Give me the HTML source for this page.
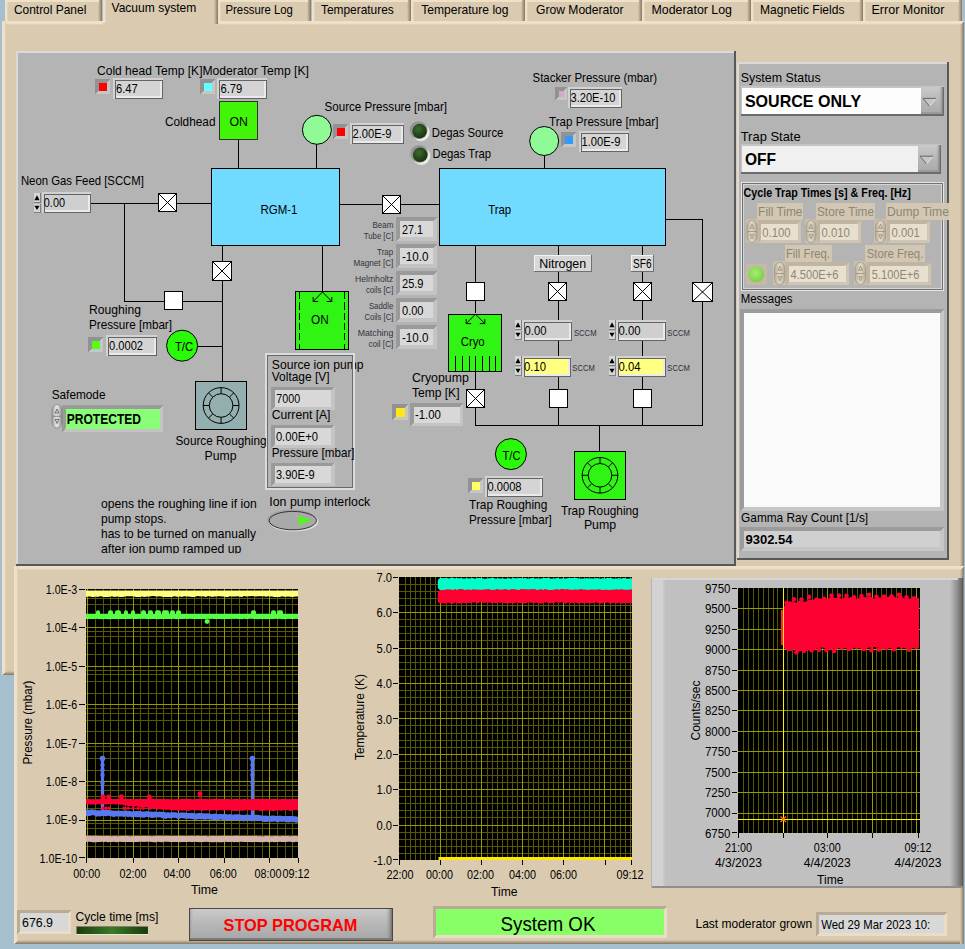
<!DOCTYPE html><html><head><meta charset="utf-8"><title>Vacuum system</title><style>html,body{margin:0;padding:0;background:#A6BFCE;overflow:hidden}svg{display:block;font-family:"Liberation Sans", sans-serif}</style></head><body>
<svg width="965" height="949" viewBox="0 0 965 949">
<g shape-rendering="crispEdges">
<rect x="0" y="0" width="965" height="949" fill="#A6BFCE" />
</g>
<defs><linearGradient id="bl" x1="0" x2="1" y1="0" y2="0"><stop offset="0" stop-color="#EEE1C7"/><stop offset="0.6" stop-color="#EEE1C7"/><stop offset="1" stop-color="#D9CAB0"/></linearGradient><linearGradient id="bt" x1="0" x2="0" y1="0" y2="1"><stop offset="0" stop-color="#EEE1C7"/><stop offset="0.6" stop-color="#EEE1C7"/><stop offset="1" stop-color="#D9CAB0"/></linearGradient><linearGradient id="br" x1="0" x2="1" y1="0" y2="0"><stop offset="0" stop-color="#D9CAB0"/><stop offset="1" stop-color="#857861"/></linearGradient><linearGradient id="bb" x1="0" x2="0" y1="0" y2="1"><stop offset="0" stop-color="#D9CAB0"/><stop offset="1" stop-color="#857861"/></linearGradient></defs>
<g shape-rendering="crispEdges">
<rect x="2" y="21" width="962" height="654" fill="#D9CAB0"/>
<rect x="2" y="21" width="962" height="4" fill="url(#bt)"/>
<rect x="2" y="21" width="4" height="654" fill="url(#bl)"/>
<polygon points="2,675 6,671 964,671 964,675" fill="url(#bb)"/>
<polygon points="964,21 960,25 960,675 964,675" fill="url(#br)"/>
<rect x="5" y="0" width="97" height="21" fill="#D9CAB0"/>
<rect x="5" y="0" width="3" height="21" fill="url(#bl)"/>
<rect x="98" y="0" width="4" height="21" fill="url(#br)"/>
<rect x="5" y="0" width="94" height="2" fill="#EEE1C7"/>
<rect x="218" y="0" width="93" height="21" fill="#D9CAB0"/>
<rect x="218" y="0" width="3" height="21" fill="url(#bl)"/>
<rect x="307" y="0" width="4" height="21" fill="url(#br)"/>
<rect x="218" y="0" width="90" height="2" fill="#EEE1C7"/>
<rect x="312" y="0" width="99" height="21" fill="#D9CAB0"/>
<rect x="312" y="0" width="3" height="21" fill="url(#bl)"/>
<rect x="407" y="0" width="4" height="21" fill="url(#br)"/>
<rect x="312" y="0" width="96" height="2" fill="#EEE1C7"/>
<rect x="411" y="0" width="114" height="21" fill="#D9CAB0"/>
<rect x="411" y="0" width="3" height="21" fill="url(#bl)"/>
<rect x="521" y="0" width="4" height="21" fill="url(#br)"/>
<rect x="411" y="0" width="111" height="2" fill="#EEE1C7"/>
<rect x="525" y="0" width="117" height="21" fill="#D9CAB0"/>
<rect x="525" y="0" width="3" height="21" fill="url(#bl)"/>
<rect x="638" y="0" width="4" height="21" fill="url(#br)"/>
<rect x="525" y="0" width="114" height="2" fill="#EEE1C7"/>
<rect x="642" y="0" width="109" height="21" fill="#D9CAB0"/>
<rect x="642" y="0" width="3" height="21" fill="url(#bl)"/>
<rect x="747" y="0" width="4" height="21" fill="url(#br)"/>
<rect x="642" y="0" width="106" height="2" fill="#EEE1C7"/>
<rect x="751" y="0" width="112" height="21" fill="#D9CAB0"/>
<rect x="751" y="0" width="3" height="21" fill="url(#bl)"/>
<rect x="859" y="0" width="4" height="21" fill="url(#br)"/>
<rect x="751" y="0" width="109" height="2" fill="#EEE1C7"/>
<rect x="863" y="0" width="99" height="21" fill="#D9CAB0"/>
<rect x="863" y="0" width="3" height="21" fill="url(#bl)"/>
<rect x="958" y="0" width="4" height="21" fill="url(#br)"/>
<rect x="863" y="0" width="96" height="2" fill="#EEE1C7"/>
<rect x="103" y="0" width="115" height="25" fill="#D9CAB0"/>
<rect x="103" y="0" width="3" height="23" fill="url(#bl)"/>
<rect x="214" y="0" width="4" height="24" fill="url(#br)"/>
</g>
<text x="13.9" y="14.0" font-size="12.7" font-weight="normal" fill="#000" text-anchor="start" textLength="72.4" lengthAdjust="spacingAndGlyphs" >Control Panel</text>
<text x="111.5" y="12.0" font-size="12.7" font-weight="normal" fill="#000" text-anchor="start" textLength="84.8" lengthAdjust="spacingAndGlyphs" >Vacuum system</text>
<text x="225.5" y="14.0" font-size="12.7" font-weight="normal" fill="#000" text-anchor="start" textLength="67.4" lengthAdjust="spacingAndGlyphs" >Pressure Log</text>
<text x="321.0" y="14.0" font-size="12.7" font-weight="normal" fill="#000" text-anchor="start" textLength="72.7" lengthAdjust="spacingAndGlyphs" >Temperatures</text>
<text x="421.3" y="14.0" font-size="12.7" font-weight="normal" fill="#000" text-anchor="start" textLength="87.2" lengthAdjust="spacingAndGlyphs" >Temperature log</text>
<text x="536.0" y="14.0" font-size="12.7" font-weight="normal" fill="#000" text-anchor="start" textLength="87.5" lengthAdjust="spacingAndGlyphs" >Grow Moderator</text>
<text x="651.5" y="14.0" font-size="12.7" font-weight="normal" fill="#000" text-anchor="start" textLength="80.5" lengthAdjust="spacingAndGlyphs" >Moderator Log</text>
<text x="760.0" y="14.0" font-size="12.7" font-weight="normal" fill="#000" text-anchor="start" textLength="84.5" lengthAdjust="spacingAndGlyphs" >Magnetic Fields</text>
<text x="871.5" y="14.0" font-size="12.7" font-weight="normal" fill="#000" text-anchor="start" textLength="73.0" lengthAdjust="spacingAndGlyphs" >Error Monitor</text>
<g shape-rendering="crispEdges">
<rect x="14" y="566" width="950" height="378" fill="#D9CAB0"/>
<rect x="14" y="566" width="950" height="4" fill="url(#bt)"/>
<rect x="14" y="566" width="4" height="378" fill="url(#bl)"/>
<polygon points="14,944 18,940 964,940 964,944" fill="url(#bb)"/>
<polygon points="964,566 960,570 960,944 964,944" fill="url(#br)"/>
<rect x="16" y="51" width="720" height="515" fill="#B4B4B4" />
<rect x="16" y="51" width="720" height="2" fill="#DADADA"/>
<rect x="16" y="51" width="2" height="515" fill="#DADADA"/>
<rect x="16" y="564" width="720" height="2" fill="#585858"/>
<rect x="734" y="51" width="2" height="515" fill="#585858"/>
<rect x="737" y="62" width="212" height="498" fill="#B4B4B4" />
<rect x="737" y="62" width="212" height="2" fill="#DADADA"/>
<rect x="737" y="62" width="2" height="498" fill="#DADADA"/>
<rect x="737" y="558" width="212" height="2" fill="#585858"/>
<rect x="947" y="62" width="2" height="498" fill="#585858"/>
<rect x="91" y="203" width="67" height="1" fill="#000"/>
<rect x="177" y="203" width="34" height="1" fill="#000"/>
<rect x="124" y="203" width="1" height="98" fill="#000"/>
<rect x="124" y="301" width="40" height="1" fill="#000"/>
<rect x="183" y="301" width="39" height="1" fill="#000"/>
<rect x="238" y="140" width="1" height="28" fill="#000"/>
<rect x="316" y="144" width="1" height="24" fill="#000"/>
<rect x="222" y="246" width="1" height="15" fill="#000"/>
<rect x="222" y="280" width="1" height="101" fill="#000"/>
<rect x="198" y="346" width="24" height="1" fill="#000"/>
<rect x="322" y="246" width="1" height="45" fill="#000"/>
<rect x="340" y="204" width="42" height="1" fill="#000"/>
<rect x="401" y="204" width="38" height="1" fill="#000"/>
<rect x="544" y="156" width="1" height="12" fill="#000"/>
<rect x="666" y="219" width="37" height="1" fill="#000"/>
<rect x="702" y="219" width="1" height="63" fill="#000"/>
<rect x="702" y="302" width="1" height="124" fill="#000"/>
<rect x="475" y="246" width="1" height="36" fill="#000"/>
<rect x="475" y="300" width="1" height="13" fill="#000"/>
<rect x="475" y="371" width="1" height="18" fill="#000"/>
<rect x="475" y="407" width="1" height="19" fill="#000"/>
<rect x="558" y="246" width="1" height="9" fill="#000"/>
<rect x="558" y="272" width="1" height="10" fill="#000"/>
<rect x="558" y="301" width="1" height="20" fill="#000"/>
<rect x="558" y="341" width="1" height="16" fill="#000"/>
<rect x="558" y="377" width="1" height="12" fill="#000"/>
<rect x="558" y="408" width="1" height="18" fill="#000"/>
<rect x="642" y="246" width="1" height="9" fill="#000"/>
<rect x="642" y="272" width="1" height="10" fill="#000"/>
<rect x="642" y="301" width="1" height="20" fill="#000"/>
<rect x="642" y="341" width="1" height="16" fill="#000"/>
<rect x="642" y="377" width="1" height="12" fill="#000"/>
<rect x="642" y="408" width="1" height="18" fill="#000"/>
<rect x="475" y="425" width="228" height="1" fill="#000"/>
<rect x="599" y="425" width="1" height="26" fill="#000"/>
<rect x="211.6" y="168.6" width="127.8" height="76.8" fill="#70DBFF" stroke="#000" stroke-width="1.2" />
<rect x="439.6" y="168.6" width="225.8" height="76.8" fill="#70DBFF" stroke="#000" stroke-width="1.2" />
<rect x="219.5" y="101.5" width="38" height="38" fill="#40F508" stroke="#303030" stroke-width="1" />
<rect x="295.7" y="291.7" width="52.6" height="57.6" fill="#30F514" stroke="#000" stroke-width="1.4" />
<rect x="448.7" y="314.2" width="52.6" height="57.1" fill="#30F514" stroke="#000" stroke-width="1.4" />
<rect x="574.6" y="451.6" width="50.8" height="47.8" fill="#30F514" stroke="#000" stroke-width="1.2" />
<rect x="195.6" y="381.6" width="50.8" height="47.8" fill="#94AFAF" stroke="#000" stroke-width="1.2" />
<rect x="158.7" y="193.7" width="17.6" height="17.6" fill="#fff" stroke="#000" stroke-width="1.4" />
<g shape-rendering="auto"><path d="M159 194L176 211M176 194L159 211" stroke="#000" stroke-width="1" fill="none"/></g>
<rect x="212.7" y="261.7" width="18.6" height="18.6" fill="#fff" stroke="#000" stroke-width="1.4" />
<g shape-rendering="auto"><path d="M213 262L231 280M231 262L213 280" stroke="#000" stroke-width="1" fill="none"/></g>
<rect x="382.7" y="195.7" width="17.6" height="17.6" fill="#fff" stroke="#000" stroke-width="1.4" />
<g shape-rendering="auto"><path d="M383 196L400 213M400 196L383 213" stroke="#000" stroke-width="1" fill="none"/></g>
<rect x="164.7" y="291.7" width="17.6" height="17.6" fill="#fff" stroke="#000" stroke-width="1.4" />
<rect x="466.7" y="282.7" width="17.6" height="17.6" fill="#fff" stroke="#000" stroke-width="1.4" />
<rect x="548.7" y="282.7" width="17.6" height="17.6" fill="#fff" stroke="#000" stroke-width="1.4" />
<g shape-rendering="auto"><path d="M549 283L566 300M566 283L549 300" stroke="#000" stroke-width="1" fill="none"/></g>
<rect x="633.7" y="282.7" width="17.6" height="17.6" fill="#fff" stroke="#000" stroke-width="1.4" />
<g shape-rendering="auto"><path d="M634 283L651 300M651 283L634 300" stroke="#000" stroke-width="1" fill="none"/></g>
<rect x="692.7" y="282.7" width="19.6" height="18.6" fill="#fff" stroke="#000" stroke-width="1.4" />
<g shape-rendering="auto"><path d="M693 283L712 301M712 283L693 301" stroke="#000" stroke-width="1" fill="none"/></g>
<rect x="466.7" y="389.7" width="17.6" height="17.6" fill="#fff" stroke="#000" stroke-width="1.4" />
<g shape-rendering="auto"><path d="M467 390L484 407M484 390L467 407" stroke="#000" stroke-width="1" fill="none"/></g>
<rect x="549.7" y="389.7" width="17.6" height="17.6" fill="#fff" stroke="#000" stroke-width="1.4" />
<rect x="633.7" y="389.7" width="17.6" height="17.6" fill="#fff" stroke="#000" stroke-width="1.4" />
<rect x="299" y="292" width="1" height="7" fill="#000"/>
<rect x="299" y="302" width="1" height="8" fill="#000"/>
<rect x="299" y="313" width="1" height="7" fill="#000"/>
<rect x="299" y="323" width="1" height="7" fill="#000"/>
<rect x="299" y="333" width="1" height="7" fill="#000"/>
<rect x="299" y="344" width="1" height="5" fill="#000"/>
<rect x="344" y="292" width="1" height="7" fill="#000"/>
<rect x="344" y="302" width="1" height="8" fill="#000"/>
<rect x="344" y="313" width="1" height="7" fill="#000"/>
<rect x="344" y="323" width="1" height="7" fill="#000"/>
<rect x="344" y="333" width="1" height="7" fill="#000"/>
<rect x="344" y="344" width="1" height="5" fill="#000"/>
<rect x="455" y="356" width="1" height="15" fill="#000"/>
<rect x="462" y="356" width="1" height="15" fill="#000"/>
<rect x="469" y="356" width="1" height="15" fill="#000"/>
<rect x="475" y="356" width="1" height="15" fill="#000"/>
<rect x="482" y="356" width="1" height="15" fill="#000"/>
<rect x="489" y="356" width="1" height="15" fill="#000"/>
<rect x="495" y="356" width="1" height="15" fill="#000"/>
</g>
<path d="M322.5 292L313.2 301.5M322.5 292L331.8 301.5M313.2 297.0V301.5H318.2M331.8 297.0V301.5H326.8" stroke="#000" stroke-width="1" fill="none"/>
<path d="M475.5 314.2L466.2 323.6M475.5 314.2L484.8 323.6M466.2 319.1V323.6H471.2M484.8 319.1V323.6H479.8" stroke="#000" stroke-width="1" fill="none"/>
<circle cx="316.9" cy="129.8" r="14.5" fill="#90FA96" stroke="#000" stroke-width="1.0"/>
<circle cx="544.2" cy="141" r="14.5" fill="#90FA96" stroke="#000" stroke-width="1.0"/>
<circle cx="182.1" cy="345.7" r="15.5" fill="#28FA08" stroke="#000" stroke-width="1.0"/>
<circle cx="510.9" cy="454.1" r="15.5" fill="#28FA08" stroke="#000" stroke-width="1.0"/>
<g stroke="#000" stroke-width="1" fill="none"><circle cx="221.1" cy="405.5" r="17.9"/><circle cx="221.1" cy="405.5" r="11.8"/>
<path d="M221.1 417.3L221.1 423.4"/>
<path d="M212.8 413.8L208.4 418.2"/>
<path d="M209.3 405.5L203.2 405.5"/>
<path d="M212.8 397.2L208.4 392.8"/>
<path d="M221.1 393.7L221.1 387.6"/>
<path d="M229.4 397.2L233.8 392.8"/>
<path d="M232.9 405.5L239.0 405.5"/>
<path d="M229.4 413.8L233.8 418.2"/>
</g>
<g stroke="#000" stroke-width="1" fill="none"><circle cx="600" cy="475.3" r="17.8"/><circle cx="600" cy="475.3" r="11.8"/>
<path d="M600.0 487.1L600.0 493.1"/>
<path d="M591.7 483.6L587.4 487.9"/>
<path d="M588.2 475.3L582.2 475.3"/>
<path d="M591.7 467.0L587.4 462.7"/>
<path d="M600.0 463.5L600.0 457.5"/>
<path d="M608.3 467.0L612.6 462.7"/>
<path d="M611.8 475.3L617.8 475.3"/>
<path d="M608.3 483.6L612.6 487.9"/>
</g>
<defs><radialGradient id="lg1" cx="40%" cy="35%" r="70%"><stop offset="0" stop-color="#3E6A30"/><stop offset="1" stop-color="#14300C"/></radialGradient></defs>
<circle cx="420.8" cy="132.29999999999998" r="8.9" fill="#E8E8E8"/><circle cx="418.6" cy="130.1" r="8.9" fill="#949494"/>
<circle cx="419.6" cy="131.1" r="7.3" fill="url(#lg1)"/>
<defs><radialGradient id="lg2" cx="40%" cy="35%" r="70%"><stop offset="0" stop-color="#3E6A30"/><stop offset="1" stop-color="#14300C"/></radialGradient></defs>
<circle cx="421.4" cy="156.0" r="8.9" fill="#E8E8E8"/><circle cx="419.2" cy="153.8" r="8.9" fill="#949494"/>
<circle cx="420.2" cy="154.8" r="7.3" fill="url(#lg2)"/>
<g shape-rendering="crispEdges">
<rect x="95" y="79" width="15" height="15" fill="#C6C6C6" />
<polygon points="95,79 110,79 107,83 99,91 95,94" fill="#929292"/>
<rect x="99" y="83" width="8" height="8" fill="#FF0000" />
<rect x="113" y="78" width="50" height="21" fill="#D2D2D2" />
<rect x="115" y="80" width="48" height="19" fill="#646464" />
<rect x="116" y="81" width="46" height="17" fill="#EAEAEA" />
<rect x="116" y="81" width="44" height="15" fill="#D4D4D4" />
<rect x="200" y="79" width="15" height="15" fill="#C6C6C6" />
<polygon points="200,79 215,79 212,83 204,91 200,94" fill="#929292"/>
<rect x="204" y="83" width="8" height="8" fill="#66FFFF" />
<rect x="217" y="78" width="50" height="21" fill="#D2D2D2" />
<rect x="219" y="80" width="48" height="19" fill="#646464" />
<rect x="220" y="81" width="46" height="17" fill="#EAEAEA" />
<rect x="220" y="81" width="44" height="15" fill="#D4D4D4" />
<rect x="333" y="124" width="15" height="15" fill="#C6C6C6" />
<polygon points="333,124 348,124 345,128 337,136 333,139" fill="#929292"/>
<rect x="337" y="128" width="8" height="8" fill="#FF0000" />
<rect x="350" y="123" width="54" height="21" fill="#D2D2D2" />
<rect x="352" y="125" width="52" height="19" fill="#646464" />
<rect x="353" y="126" width="50" height="17" fill="#EAEAEA" />
<rect x="353" y="126" width="48" height="15" fill="#D4D4D4" />
<rect x="555" y="87" width="12" height="13" fill="#C6C6C6" />
<polygon points="555,87 567,87 564,91 559,97 555,100" fill="#929292"/>
<rect x="559" y="91" width="5" height="6" fill="#D8A8C8" />
<rect x="568" y="87" width="54" height="21" fill="#D2D2D2" />
<rect x="570" y="89" width="52" height="19" fill="#646464" />
<rect x="571" y="90" width="50" height="17" fill="#EAEAEA" />
<rect x="571" y="90" width="48" height="15" fill="#D4D4D4" />
<rect x="561" y="132" width="15" height="15" fill="#C6C6C6" />
<polygon points="561,132 576,132 573,136 565,144 561,147" fill="#929292"/>
<rect x="565" y="136" width="8" height="8" fill="#3399FF" />
<rect x="579" y="131" width="50" height="21" fill="#D2D2D2" />
<rect x="581" y="133" width="48" height="19" fill="#646464" />
<rect x="582" y="134" width="46" height="17" fill="#EAEAEA" />
<rect x="582" y="134" width="44" height="15" fill="#D4D4D4" />
<rect x="88" y="337" width="15" height="15" fill="#C6C6C6" />
<polygon points="88,337 103,337 100,341 92,349 88,352" fill="#929292"/>
<rect x="92" y="341" width="8" height="8" fill="#55FF11" />
<rect x="106" y="335" width="51" height="21" fill="#D2D2D2" />
<rect x="108" y="337" width="49" height="19" fill="#646464" />
<rect x="109" y="338" width="47" height="17" fill="#EAEAEA" />
<rect x="109" y="338" width="45" height="15" fill="#D4D4D4" />
<rect x="468" y="478" width="15" height="15" fill="#C6C6C6" />
<polygon points="468,478 483,478 480,482 472,490 468,493" fill="#929292"/>
<rect x="472" y="482" width="8" height="8" fill="#FFFF66" />
<rect x="485" y="476" width="58" height="21" fill="#D2D2D2" />
<rect x="487" y="478" width="56" height="19" fill="#646464" />
<rect x="488" y="479" width="54" height="17" fill="#EAEAEA" />
<rect x="488" y="479" width="52" height="15" fill="#D4D4D4" />
<rect x="34" y="193" width="7" height="9.5" fill="#D6D6D6" />
<rect x="34" y="201.5" width="7" height="1" fill="#808080"/>
<rect x="40" y="193" width="1" height="9.5" fill="#808080"/>
<polygon points="34.4,200.3 39.6,200.3 37.0,195.3" fill="#000" shape-rendering="auto"/>
<rect x="34" y="203.5" width="7" height="9.5" fill="#D6D6D6" />
<rect x="34" y="212" width="7" height="1" fill="#808080"/>
<rect x="40" y="203.5" width="1" height="9.5" fill="#808080"/>
<polygon points="34.4,205.7 39.6,205.7 37.0,210" fill="#000" shape-rendering="auto"/>
<rect x="42" y="192" width="49" height="21" fill="#D2D2D2" />
<rect x="44" y="194" width="47" height="19" fill="#646464" />
<rect x="45" y="195" width="45" height="17" fill="#EAEAEA" />
<rect x="45" y="195" width="43" height="15" fill="#CFCFCF" />
<rect x="515" y="320" width="7" height="9.5" fill="#D6D6D6" />
<rect x="515" y="328.5" width="7" height="1" fill="#808080"/>
<rect x="521" y="320" width="1" height="9.5" fill="#808080"/>
<polygon points="515.4,327.3 520.6,327.3 518.0,322.3" fill="#000" shape-rendering="auto"/>
<rect x="515" y="330.5" width="7" height="9.5" fill="#D6D6D6" />
<rect x="515" y="339" width="7" height="1" fill="#808080"/>
<rect x="521" y="330.5" width="1" height="9.5" fill="#808080"/>
<polygon points="515.4,332.7 520.6,332.7 518.0,337" fill="#000" shape-rendering="auto"/>
<rect x="522" y="320" width="50" height="21" fill="#D2D2D2" />
<rect x="524" y="322" width="48" height="19" fill="#646464" />
<rect x="525" y="323" width="46" height="17" fill="#EAEAEA" />
<rect x="525" y="323" width="44" height="15" fill="#CFCFCF" />
<rect x="515" y="356" width="7" height="9.5" fill="#D6D6D6" />
<rect x="515" y="364.5" width="7" height="1" fill="#808080"/>
<rect x="521" y="356" width="1" height="9.5" fill="#808080"/>
<polygon points="515.4,363.3 520.6,363.3 518.0,358.3" fill="#000" shape-rendering="auto"/>
<rect x="515" y="366.5" width="7" height="9.5" fill="#D6D6D6" />
<rect x="515" y="375" width="7" height="1" fill="#808080"/>
<rect x="521" y="366.5" width="1" height="9.5" fill="#808080"/>
<polygon points="515.4,368.7 520.6,368.7 518.0,373" fill="#000" shape-rendering="auto"/>
<rect x="522" y="356" width="49" height="21" fill="#D2D2D2" />
<rect x="524" y="358" width="47" height="19" fill="#646464" />
<rect x="525" y="359" width="45" height="17" fill="#EAEAEA" />
<rect x="525" y="359" width="43" height="15" fill="#FFFF82" />
<rect x="609" y="320" width="7" height="9.5" fill="#D6D6D6" />
<rect x="609" y="328.5" width="7" height="1" fill="#808080"/>
<rect x="615" y="320" width="1" height="9.5" fill="#808080"/>
<polygon points="609.4,327.3 614.6,327.3 612.0,322.3" fill="#000" shape-rendering="auto"/>
<rect x="609" y="330.5" width="7" height="9.5" fill="#D6D6D6" />
<rect x="609" y="339" width="7" height="1" fill="#808080"/>
<rect x="615" y="330.5" width="1" height="9.5" fill="#808080"/>
<polygon points="609.4,332.7 614.6,332.7 612.0,337" fill="#000" shape-rendering="auto"/>
<rect x="616" y="320" width="50" height="21" fill="#D2D2D2" />
<rect x="618" y="322" width="48" height="19" fill="#646464" />
<rect x="619" y="323" width="46" height="17" fill="#EAEAEA" />
<rect x="619" y="323" width="44" height="15" fill="#CFCFCF" />
<rect x="609" y="356" width="7" height="9.5" fill="#D6D6D6" />
<rect x="609" y="364.5" width="7" height="1" fill="#808080"/>
<rect x="615" y="356" width="1" height="9.5" fill="#808080"/>
<polygon points="609.4,363.3 614.6,363.3 612.0,358.3" fill="#000" shape-rendering="auto"/>
<rect x="609" y="366.5" width="7" height="9.5" fill="#D6D6D6" />
<rect x="609" y="375" width="7" height="1" fill="#808080"/>
<rect x="615" y="366.5" width="1" height="9.5" fill="#808080"/>
<polygon points="609.4,368.7 614.6,368.7 612.0,373" fill="#000" shape-rendering="auto"/>
<rect x="616" y="356" width="50" height="21" fill="#D2D2D2" />
<rect x="618" y="358" width="48" height="19" fill="#646464" />
<rect x="619" y="359" width="46" height="17" fill="#EAEAEA" />
<rect x="619" y="359" width="44" height="15" fill="#FFFF82" />
<rect x="396" y="217" width="41" height="24" fill="#C4C4C4" />
<polygon points="396,217 437,217 433,221 400,237 396,241" fill="#9A9A9A"/>
<rect x="400" y="221" width="33" height="16" fill="#D8D8D8" />
<rect x="396" y="244" width="41" height="24" fill="#C4C4C4" />
<polygon points="396,244 437,244 433,248 400,264 396,268" fill="#9A9A9A"/>
<rect x="400" y="248" width="33" height="16" fill="#D8D8D8" />
<rect x="396" y="271" width="41" height="24" fill="#C4C4C4" />
<polygon points="396,271 437,271 433,275 400,291 396,295" fill="#9A9A9A"/>
<rect x="400" y="275" width="33" height="16" fill="#D8D8D8" />
<rect x="396" y="298" width="41" height="24" fill="#C4C4C4" />
<polygon points="396,298 437,298 433,302 400,318 396,322" fill="#9A9A9A"/>
<rect x="400" y="302" width="33" height="16" fill="#D8D8D8" />
<rect x="396" y="325" width="41" height="24" fill="#C4C4C4" />
<polygon points="396,325 437,325 433,329 400,345 396,349" fill="#9A9A9A"/>
<rect x="400" y="329" width="33" height="16" fill="#D8D8D8" />
<rect x="534" y="255" width="58" height="17" fill="#D8D8D8" />
<rect x="534" y="255" width="58" height="1" fill="#F4F4F4"/>
<rect x="534" y="255" width="1" height="17" fill="#F4F4F4"/>
<rect x="534" y="271" width="58" height="1" fill="#707070"/>
<rect x="591" y="255" width="1" height="17" fill="#707070"/>
<rect x="631" y="255" width="23" height="17" fill="#D8D8D8" />
<rect x="631" y="255" width="23" height="1" fill="#F4F4F4"/>
<rect x="631" y="255" width="1" height="17" fill="#F4F4F4"/>
<rect x="631" y="271" width="23" height="1" fill="#707070"/>
<rect x="653" y="255" width="1" height="17" fill="#707070"/>
<rect x="392" y="404" width="16" height="16" fill="#C6C6C6" />
<polygon points="392,404 408,404 405,408 396,417 392,420" fill="#929292"/>
<rect x="396" y="408" width="9" height="9" fill="#FFE619" />
<rect x="410" y="403" width="53" height="23" fill="#C4C4C4" />
<polygon points="410,403 463,403 459.5,406.5 413.5,422.5 410,426" fill="#9A9A9A"/>
<rect x="413.5" y="406.5" width="46.0" height="16.0" fill="#D8D8D8" />
<rect x="265" y="353" width="90" height="137" fill="#B4B4B4" />
<rect x="266.0" y="354.0" width="88" height="135" fill="none" stroke="#DCDCDC" stroke-width="2" />
<rect x="267.5" y="355.5" width="85" height="132" fill="none" stroke="#6A6A6A" stroke-width="1" />
<rect x="271" y="387" width="64" height="23" fill="#C4C4C4" />
<polygon points="271,387 335,387 331,390 275,407 271,410" fill="#9A9A9A"/>
<rect x="275" y="390" width="56" height="17" fill="#D8D8D8" />
<rect x="271" y="425" width="64" height="23" fill="#C4C4C4" />
<polygon points="271,425 335,425 331,428 275,445 271,448" fill="#9A9A9A"/>
<rect x="275" y="428" width="56" height="17" fill="#D8D8D8" />
<rect x="271" y="463" width="64" height="23" fill="#C4C4C4" />
<polygon points="271,463 335,463 331,466 275,483 271,486" fill="#9A9A9A"/>
<rect x="275" y="466" width="56" height="17" fill="#D8D8D8" />
<rect x="62" y="405" width="101" height="27" fill="#C4C4C4" />
<polygon points="62,405 163,405 159.5,408.5 65.5,428.5 62,432" fill="#9A9A9A"/>
<rect x="65.5" y="408.5" width="94.0" height="20.0" fill="#88FF77" />
</g>
<defs><linearGradient id="rg1" x1="0" x2="1"><stop offset="0" stop-color="#9A9A9A"/><stop offset="0.4" stop-color="#E2E2E2"/><stop offset="0.6" stop-color="#DCDCDC"/><stop offset="1" stop-color="#8E8E8E"/></linearGradient><linearGradient id="rg2" x1="0" x2="1"><stop offset="0" stop-color="#B4AA96"/><stop offset="0.4" stop-color="#DFD6C3"/><stop offset="0.6" stop-color="#DAD1BE"/><stop offset="1" stop-color="#B0A692"/></linearGradient></defs>
<rect x="52" y="404.5" width="10" height="23.5" rx="5.0" ry="6.0" fill="url(#rg1)" stroke="#7C7C7C" stroke-width="0.7"/>
<path d="M52.5 416.25H61.5" stroke="#7C7C7C" stroke-width="0.9"/>
<path d="M55.2 413.05L57.0 409.05L58.8 413.05ZM55.2 419.45L57.0 423.45L58.8 419.45Z" stroke="#444" stroke-width="0.7" fill="none"/>
<ellipse cx="293.8" cy="521.6" rx="24.6" ry="10" fill="#DCDCDC"/><ellipse cx="291.8" cy="519.6" rx="24.6" ry="10" fill="#A2A2A2"/>
<ellipse cx="292.8" cy="520.6" rx="23.6" ry="9.2" fill="#A9A9A9" stroke="#333" stroke-width="1"/>
<polygon points="298.6,515.5 298.6,525.5 311.8,520.5" fill="#55F51A"/>
<text x="97.0" y="75.0" font-size="12.7" font-weight="normal" fill="#000" text-anchor="start" textLength="105.5" lengthAdjust="spacingAndGlyphs" >Cold head Temp [K]</text>
<text x="202.5" y="75.0" font-size="12.7" font-weight="normal" fill="#000" text-anchor="start" textLength="106.4" lengthAdjust="spacingAndGlyphs" >Moderator Temp [K]</text>
<text x="116.0" y="92.7" font-size="12.7" font-weight="normal" fill="#000" text-anchor="start" textLength="21.8" lengthAdjust="spacingAndGlyphs" >6.47</text>
<text x="220.5" y="92.7" font-size="12.7" font-weight="normal" fill="#000" text-anchor="start" textLength="21.8" lengthAdjust="spacingAndGlyphs" >6.79</text>
<text x="164.9" y="125.8" font-size="12.7" font-weight="normal" fill="#000" text-anchor="start" textLength="50.6" lengthAdjust="spacingAndGlyphs" >Coldhead</text>
<text x="229.5" y="126.0" font-size="12.7" font-weight="normal" fill="#000" text-anchor="start" textLength="18.5" lengthAdjust="spacingAndGlyphs" >ON</text>
<text x="324.5" y="111.0" font-size="12.7" font-weight="normal" fill="#000" text-anchor="start" textLength="122.5" lengthAdjust="spacingAndGlyphs" >Source Pressure [mbar]</text>
<text x="352.5" y="137.7" font-size="12.7" font-weight="normal" fill="#000" text-anchor="start" textLength="39.0" lengthAdjust="spacingAndGlyphs" >2.00E-9</text>
<text x="431.8" y="137.0" font-size="12.7" font-weight="normal" fill="#000" text-anchor="start" textLength="71.5" lengthAdjust="spacingAndGlyphs" >Degas Source</text>
<text x="432.5" y="158.0" font-size="12.7" font-weight="normal" fill="#000" text-anchor="start" textLength="58.5" lengthAdjust="spacingAndGlyphs" >Degas Trap</text>
<text x="20.9" y="184.8" font-size="12.7" font-weight="normal" fill="#000" text-anchor="start" textLength="123.0" lengthAdjust="spacingAndGlyphs" >Neon Gas Feed [SCCM]</text>
<text x="43.8" y="206.6" font-size="12.7" font-weight="normal" fill="#000" text-anchor="start" textLength="21.2" lengthAdjust="spacingAndGlyphs" >0.00</text>
<text x="260.5" y="214.0" font-size="12.7" font-weight="normal" fill="#000" text-anchor="start" textLength="37.0" lengthAdjust="spacingAndGlyphs" >RGM-1</text>
<text x="488.2" y="214.0" font-size="12.7" font-weight="normal" fill="#000" text-anchor="start" textLength="23.0" lengthAdjust="spacingAndGlyphs" >Trap</text>
<text x="532.5" y="81.8" font-size="12.7" font-weight="normal" fill="#000" text-anchor="start" textLength="124.6" lengthAdjust="spacingAndGlyphs" >Stacker Pressure (mbar)</text>
<text x="570.5" y="101.8" font-size="12.7" font-weight="normal" fill="#000" text-anchor="start" textLength="45.0" lengthAdjust="spacingAndGlyphs" >3.20E-10</text>
<text x="549.1" y="125.8" font-size="12.7" font-weight="normal" fill="#000" text-anchor="start" textLength="109.3" lengthAdjust="spacingAndGlyphs" >Trap Pressure [mbar]</text>
<text x="581.5" y="145.8" font-size="12.7" font-weight="normal" fill="#000" text-anchor="start" textLength="39.0" lengthAdjust="spacingAndGlyphs" >1.00E-9</text>
<text x="539.2" y="267.6" font-size="12.7" font-weight="normal" fill="#000" text-anchor="start" textLength="47.0" lengthAdjust="spacingAndGlyphs" >Nitrogen</text>
<text x="633.0" y="267.6" font-size="12.7" font-weight="normal" fill="#000" text-anchor="start" textLength="18.5" lengthAdjust="spacingAndGlyphs" >SF6</text>
<text x="89.0" y="314.3" font-size="12.7" font-weight="normal" fill="#000" text-anchor="start" textLength="52.0" lengthAdjust="spacingAndGlyphs" >Roughing</text>
<text x="89.0" y="329.0" font-size="12.7" font-weight="normal" fill="#000" text-anchor="start" textLength="83.0" lengthAdjust="spacingAndGlyphs" >Pressure [mbar]</text>
<text x="109.0" y="349.7" font-size="12.7" font-weight="normal" fill="#000" text-anchor="start" textLength="34.0" lengthAdjust="spacingAndGlyphs" >0.0002</text>
<text x="174.9" y="350.8" font-size="12.7" font-weight="normal" fill="#000" text-anchor="start" textLength="18.4" lengthAdjust="spacingAndGlyphs" >T/C</text>
<text x="502.5" y="460.3" font-size="12.7" font-weight="normal" fill="#000" text-anchor="start" textLength="18.0" lengthAdjust="spacingAndGlyphs" >T/C</text>
<text x="51.7" y="398.6" font-size="12.7" font-weight="normal" fill="#000" text-anchor="start" textLength="53.8" lengthAdjust="spacingAndGlyphs" >Safemode</text>
<text x="66.7" y="423.6" font-size="15" font-weight="bold" fill="#000" text-anchor="start" textLength="74.3" lengthAdjust="spacingAndGlyphs" >PROTECTED</text>
<text x="175.5" y="445.4" font-size="12.7" font-weight="normal" fill="#000" text-anchor="start" textLength="91.0" lengthAdjust="spacingAndGlyphs" >Source Roughing</text>
<text x="204.5" y="459.5" font-size="12.7" font-weight="normal" fill="#000" text-anchor="start" textLength="32.0" lengthAdjust="spacingAndGlyphs" >Pump</text>
<text x="311.1" y="323.5" font-size="12.7" font-weight="normal" fill="#000" text-anchor="start" textLength="17.7" lengthAdjust="spacingAndGlyphs" >ON</text>
<text x="460.7" y="346.3" font-size="12.7" font-weight="normal" fill="#000" text-anchor="start" textLength="24.0" lengthAdjust="spacingAndGlyphs" >Cryo</text>
<text x="393.3" y="227.8" font-size="9" font-weight="normal" fill="#33333F" text-anchor="end" textLength="20.8" lengthAdjust="spacingAndGlyphs" >Beam</text>
<text x="393.3" y="238.8" font-size="9" font-weight="normal" fill="#33333F" text-anchor="end" textLength="29.5" lengthAdjust="spacingAndGlyphs" >Tube [C]</text>
<text x="402.0" y="233.6" font-size="12.7" font-weight="normal" fill="#000" text-anchor="start" textLength="21.0" lengthAdjust="spacingAndGlyphs" >27.1</text>
<text x="393.3" y="254.8" font-size="9" font-weight="normal" fill="#33333F" text-anchor="end" textLength="16.2" lengthAdjust="spacingAndGlyphs" >Trap</text>
<text x="393.3" y="265.8" font-size="9" font-weight="normal" fill="#33333F" text-anchor="end" textLength="39.8" lengthAdjust="spacingAndGlyphs" >Magnet [C]</text>
<text x="402.0" y="260.6" font-size="12.7" font-weight="normal" fill="#000" text-anchor="start" textLength="26.5" lengthAdjust="spacingAndGlyphs" >-10.0</text>
<text x="393.3" y="281.8" font-size="9" font-weight="normal" fill="#33333F" text-anchor="end" textLength="38.3" lengthAdjust="spacingAndGlyphs" >Helmholtz</text>
<text x="393.3" y="292.8" font-size="9" font-weight="normal" fill="#33333F" text-anchor="end" textLength="27.4" lengthAdjust="spacingAndGlyphs" >coils [C]</text>
<text x="402.0" y="287.6" font-size="12.7" font-weight="normal" fill="#000" text-anchor="start" textLength="21.5" lengthAdjust="spacingAndGlyphs" >25.9</text>
<text x="393.3" y="308.8" font-size="9" font-weight="normal" fill="#33333F" text-anchor="end" textLength="24.4" lengthAdjust="spacingAndGlyphs" >Saddle</text>
<text x="393.3" y="319.8" font-size="9" font-weight="normal" fill="#33333F" text-anchor="end" textLength="28.9" lengthAdjust="spacingAndGlyphs" >Coils [C]</text>
<text x="402.0" y="314.6" font-size="12.7" font-weight="normal" fill="#000" text-anchor="start" textLength="21.5" lengthAdjust="spacingAndGlyphs" >0.00</text>
<text x="393.3" y="335.8" font-size="9" font-weight="normal" fill="#33333F" text-anchor="end" textLength="35.6" lengthAdjust="spacingAndGlyphs" >Matching</text>
<text x="393.3" y="346.8" font-size="9" font-weight="normal" fill="#33333F" text-anchor="end" textLength="24.9" lengthAdjust="spacingAndGlyphs" >coil [C]</text>
<text x="402.0" y="341.6" font-size="12.7" font-weight="normal" fill="#000" text-anchor="start" textLength="26.5" lengthAdjust="spacingAndGlyphs" >-10.0</text>
<clipPath id="cl1"><rect x="268" y="355" width="86" height="133"/></clipPath>
<text x="271.8" y="369.0" font-size="12.7" font-weight="normal" fill="#000" text-anchor="start" textLength="91.7" lengthAdjust="spacingAndGlyphs" >Source ion pump</text>
<g shape-rendering="crispEdges">
<rect x="352" y="358" width="1" height="16" fill="#6A6A6A"/>
<rect x="353" y="358" width="2" height="16" fill="#DCDCDC"/>
</g>
<text x="271.8" y="380.7" font-size="12.7" font-weight="normal" fill="#000" text-anchor="start" textLength="57.7" lengthAdjust="spacingAndGlyphs" >Voltage [V]</text>
<text x="276.3" y="403.0" font-size="12.7" font-weight="normal" fill="#000" text-anchor="start" textLength="23.8" lengthAdjust="spacingAndGlyphs" >7000</text>
<text x="271.8" y="418.8" font-size="12.7" font-weight="normal" fill="#000" text-anchor="start" textLength="58.7" lengthAdjust="spacingAndGlyphs" >Current [A]</text>
<text x="275.9" y="441.0" font-size="12.7" font-weight="normal" fill="#000" text-anchor="start" textLength="42.0" lengthAdjust="spacingAndGlyphs" >0.00E+0</text>
<text x="271.8" y="456.6" font-size="12.7" font-weight="normal" fill="#000" text-anchor="start" textLength="82.7" lengthAdjust="spacingAndGlyphs" >Pressure [mbar]</text>
<text x="275.9" y="478.7" font-size="12.7" font-weight="normal" fill="#000" text-anchor="start" textLength="38.8" lengthAdjust="spacingAndGlyphs" >3.90E-9</text>
<text x="269.3" y="506.3" font-size="12.7" font-weight="normal" fill="#000" text-anchor="start" textLength="101.0" lengthAdjust="spacingAndGlyphs" >Ion pump interlock</text>
<text x="411.9" y="382.0" font-size="12.7" font-weight="normal" fill="#000" text-anchor="start" textLength="57.0" lengthAdjust="spacingAndGlyphs" >Cryopump</text>
<text x="411.9" y="396.9" font-size="12.7" font-weight="normal" fill="#000" text-anchor="start" textLength="47.6" lengthAdjust="spacingAndGlyphs" >Temp [K]</text>
<text x="414.9" y="418.5" font-size="12.7" font-weight="normal" fill="#000" text-anchor="start" textLength="26.0" lengthAdjust="spacingAndGlyphs" >-1.00</text>
<text x="524.5" y="334.7" font-size="13.2" font-weight="normal" fill="#000" text-anchor="start" textLength="22.0" lengthAdjust="spacingAndGlyphs" >0.00</text>
<text x="524.0" y="370.8" font-size="13.2" font-weight="normal" fill="#000" text-anchor="start" textLength="22.0" lengthAdjust="spacingAndGlyphs" >0.10</text>
<text x="618.5" y="334.7" font-size="13.2" font-weight="normal" fill="#000" text-anchor="start" textLength="22.0" lengthAdjust="spacingAndGlyphs" >0.00</text>
<text x="618.5" y="370.8" font-size="13.2" font-weight="normal" fill="#000" text-anchor="start" textLength="22.0" lengthAdjust="spacingAndGlyphs" >0.04</text>
<text x="574.0" y="336.0" font-size="8.6" font-weight="normal" fill="#30303C" text-anchor="start" textLength="22.5" lengthAdjust="spacingAndGlyphs" >SCCM</text>
<text x="572.3" y="370.7" font-size="8.6" font-weight="normal" fill="#30303C" text-anchor="start" textLength="22.5" lengthAdjust="spacingAndGlyphs" >SCCM</text>
<text x="667.3" y="336.0" font-size="8.6" font-weight="normal" fill="#30303C" text-anchor="start" textLength="22.5" lengthAdjust="spacingAndGlyphs" >SCCM</text>
<text x="667.3" y="370.7" font-size="8.6" font-weight="normal" fill="#30303C" text-anchor="start" textLength="22.5" lengthAdjust="spacingAndGlyphs" >SCCM</text>
<text x="487.5" y="490.5" font-size="12.7" font-weight="normal" fill="#000" text-anchor="start" textLength="34.0" lengthAdjust="spacingAndGlyphs" >0.0008</text>
<text x="469.1" y="509.2" font-size="12.7" font-weight="normal" fill="#000" text-anchor="start" textLength="78.2" lengthAdjust="spacingAndGlyphs" >Trap Roughing</text>
<text x="469.1" y="524.2" font-size="12.7" font-weight="normal" fill="#000" text-anchor="start" textLength="82.7" lengthAdjust="spacingAndGlyphs" >Pressure [mbar]</text>
<text x="560.9" y="515.3" font-size="12.7" font-weight="normal" fill="#000" text-anchor="start" textLength="77.8" lengthAdjust="spacingAndGlyphs" >Trap Roughing</text>
<text x="583.9" y="529.4" font-size="12.7" font-weight="normal" fill="#000" text-anchor="start" textLength="32.2" lengthAdjust="spacingAndGlyphs" >Pump</text>
<text x="101.0" y="507.5" font-size="12.7" font-weight="normal" fill="#000" text-anchor="start" textLength="155.8" lengthAdjust="spacingAndGlyphs" >opens the roughing line if ion</text>
<text x="101.0" y="522.8" font-size="12.7" font-weight="normal" fill="#000" text-anchor="start" textLength="65.5" lengthAdjust="spacingAndGlyphs" >pump stops.</text>
<text x="101.0" y="537.6" font-size="12.7" font-weight="normal" fill="#000" text-anchor="start" textLength="154.9" lengthAdjust="spacingAndGlyphs" >has to be turned on manually</text>
<clipPath id="cl2"><rect x="90" y="540" width="200" height="13.5"/></clipPath>
<text x="101.0" y="552.5" font-size="12.7" font-weight="normal" fill="#000" text-anchor="start" textLength="140.3" lengthAdjust="spacingAndGlyphs" clip-path="url(#cl2)">after ion pump ramped up</text>
<g shape-rendering="crispEdges">
<defs><linearGradient id="cbg" x1="0" x2="0" y1="0" y2="1"><stop offset="0" stop-color="#CACACA"/><stop offset="0.5" stop-color="#B6B6B6"/><stop offset="1" stop-color="#A8A8A8"/></linearGradient><linearGradient id="cbr" x1="0" x2="1"><stop offset="0" stop-color="#B0B0B0" stop-opacity="0"/><stop offset="1" stop-color="#585858"/></linearGradient></defs>
<rect x="741" y="86" width="203" height="30" fill="#C4C4C4" />
<rect x="742" y="88" width="179" height="26" fill="#FDFDFD" />
<rect x="921" y="87" width="23" height="29" fill="url(#cbg)"/>
<rect x="939" y="87" width="5" height="29" fill="url(#cbr)"/>
<rect x="741" y="114" width="203" height="2" fill="#6C6C6C"/>
<rect x="921" y="112" width="21" height="2" fill="#9A9A9A"/>
<rect x="741" y="144" width="200" height="30" fill="#C4C4C4" />
<rect x="742" y="146" width="176" height="26" fill="#F0F0F0" />
<rect x="918" y="145" width="23" height="29" fill="url(#cbg)"/>
<rect x="936" y="145" width="5" height="29" fill="url(#cbr)"/>
<rect x="741" y="172" width="200" height="2" fill="#6C6C6C"/>
<rect x="918" y="170" width="21" height="2" fill="#9A9A9A"/>
<rect x="741.5" y="182.5" width="202" height="108" fill="none" stroke="#E4E4E4" stroke-width="1" />
<rect x="742.5" y="183.5" width="200" height="106" fill="none" stroke="#707070" stroke-width="1" />
<rect x="743.5" y="184.5" width="198" height="104" fill="none" stroke="#D4D4D4" stroke-width="1" />
<rect x="757" y="203" width="46" height="17" fill="#D2C7B2" />
<rect x="816" y="203" width="59" height="17" fill="#D2C7B2" />
<rect x="886" y="203" width="63" height="17" fill="#D2C7B2" />
<rect x="785" y="245" width="47" height="17" fill="#D2C7B2" />
<rect x="865" y="245" width="60" height="17" fill="#D2C7B2" />
<rect x="746" y="219" width="12" height="24" fill="#C9BFAB" />
<rect x="758" y="220" width="43" height="23" fill="#CFC5B1" />
<polygon points="758,220 801,220 798,223 761,240 758,243" fill="#BFB5A1"/>
<rect x="761" y="224" width="37" height="16" fill="#E8E0CF" />
<rect x="805" y="219" width="12" height="24" fill="#C9BFAB" />
<rect x="817" y="220" width="44" height="23" fill="#CFC5B1" />
<polygon points="817,220 861,220 858,223 820,240 817,243" fill="#BFB5A1"/>
<rect x="820" y="224" width="38" height="16" fill="#E8E0CF" />
<rect x="874" y="219" width="13" height="24" fill="#C9BFAB" />
<rect x="887" y="220" width="43" height="23" fill="#CFC5B1" />
<polygon points="887,220 930,220 927,223 890,240 887,243" fill="#BFB5A1"/>
<rect x="890" y="224" width="37" height="16" fill="#E8E0CF" />
<rect x="773" y="261" width="13" height="24" fill="#C9BFAB" />
<rect x="786" y="262" width="63" height="23" fill="#CFC5B1" />
<polygon points="786,262 849,262 846,265 789,282 786,285" fill="#BFB5A1"/>
<rect x="789" y="266" width="57" height="16" fill="#E8E0CF" />
<rect x="854" y="261" width="13" height="24" fill="#C9BFAB" />
<rect x="867" y="262" width="64" height="23" fill="#CFC5B1" />
<polygon points="867,262 931,262 928,265 870,282 867,285" fill="#BFB5A1"/>
<rect x="870" y="266" width="58" height="16" fill="#E8E0CF" />
<rect x="746" y="264" width="21" height="21" fill="#C4BAA6" />
<rect x="740" y="309" width="204" height="202" fill="#C6C6C6" />
<polygon points="740,309 944,309 940,313 744,507 740,511" fill="#9C9C9C"/>
<rect x="744" y="313" width="196" height="194" fill="#FAFAFA" />
<rect x="740" y="527" width="204" height="24" fill="#C6C6C6" />
<polygon points="740,527 944,527 940,531 744,547 740,551" fill="#9C9C9C"/>
<rect x="744" y="531" width="196" height="16" fill="#D0D0D0" />
</g>
<rect x="747" y="220.5" width="10" height="22.0" rx="5.0" ry="6.0" fill="url(#rg2)" stroke="#A0967F" stroke-width="0.7"/>
<path d="M747.5 231.5H756.5" stroke="#A0967F" stroke-width="0.9"/>
<path d="M750.2 228.3L752.0 224.3L753.8 228.3ZM750.2 234.7L752.0 238.7L753.8 234.7Z" stroke="#8A8070" stroke-width="0.7" fill="none"/>
<rect x="806" y="220.5" width="10" height="22.0" rx="5.0" ry="6.0" fill="url(#rg2)" stroke="#A0967F" stroke-width="0.7"/>
<path d="M806.5 231.5H815.5" stroke="#A0967F" stroke-width="0.9"/>
<path d="M809.2 228.3L811.0 224.3L812.8 228.3ZM809.2 234.7L811.0 238.7L812.8 234.7Z" stroke="#8A8070" stroke-width="0.7" fill="none"/>
<rect x="875.5" y="220.5" width="10.0" height="22.0" rx="5.0" ry="6.0" fill="url(#rg2)" stroke="#A0967F" stroke-width="0.7"/>
<path d="M876.0 231.5H885.0" stroke="#A0967F" stroke-width="0.9"/>
<path d="M878.7 228.3L880.5 224.3L882.3 228.3ZM878.7 234.7L880.5 238.7L882.3 234.7Z" stroke="#8A8070" stroke-width="0.7" fill="none"/>
<rect x="774.5" y="262.5" width="10.5" height="22.0" rx="5.25" ry="6.25" fill="url(#rg2)" stroke="#A0967F" stroke-width="0.7"/>
<path d="M775.0 273.5H784.5" stroke="#A0967F" stroke-width="0.9"/>
<path d="M777.95 270.3L779.75 266.3L781.55 270.3ZM777.95 276.7L779.75 280.7L781.55 276.7Z" stroke="#8A8070" stroke-width="0.7" fill="none"/>
<rect x="855" y="262.5" width="11" height="22.0" rx="5.5" ry="6.5" fill="url(#rg2)" stroke="#A0967F" stroke-width="0.7"/>
<path d="M855.5 273.5H865.5" stroke="#A0967F" stroke-width="0.9"/>
<path d="M858.7 270.3L860.5 266.3L862.3 270.3ZM858.7 276.7L860.5 280.7L862.3 276.7Z" stroke="#8A8070" stroke-width="0.7" fill="none"/>
<defs><radialGradient id="lg3" cx="45%" cy="40%" r="60%"><stop offset="0" stop-color="#A6EE70"/><stop offset="1" stop-color="#7AD04A"/></radialGradient></defs>
<circle cx="756.2" cy="274.3" r="8" fill="url(#lg3)"/>
<path d="M923.1 98.4H936.1L929.6 106.4Z" fill="#C6C6C6"/><path d="M936.1 98.4L929.6 106.4" stroke="#E6E6E6" stroke-width="0.9" fill="none"/><path d="M936.1 98.4H923.1L929.6 106.4" stroke="#5E5E5E" stroke-width="0.9" fill="none"/>
<path d="M920.1 156.2H933.1L926.6 164.2Z" fill="#C6C6C6"/><path d="M933.1 156.2L926.6 164.2" stroke="#E6E6E6" stroke-width="0.9" fill="none"/><path d="M933.1 156.2H920.1L926.6 164.2" stroke="#5E5E5E" stroke-width="0.9" fill="none"/>
<text x="740.7" y="81.8" font-size="12.7" font-weight="normal" fill="#000" text-anchor="start" textLength="80.0" lengthAdjust="spacingAndGlyphs" >System Status</text>
<text x="740.7" y="140.7" font-size="12.7" font-weight="normal" fill="#000" text-anchor="start" textLength="60.0" lengthAdjust="spacingAndGlyphs" >Trap State</text>
<text x="744.9" y="107.2" font-size="16.6" font-weight="bold" fill="#000" text-anchor="start" textLength="116.2" lengthAdjust="spacingAndGlyphs" >SOURCE ONLY</text>
<text x="744.9" y="165.0" font-size="16.6" font-weight="bold" fill="#000" text-anchor="start" textLength="31.0" lengthAdjust="spacingAndGlyphs" >OFF</text>
<text x="743.5" y="197.2" font-size="12" font-weight="bold" fill="#000" text-anchor="start" textLength="167.3" lengthAdjust="spacingAndGlyphs" >Cycle Trap Times [s] &amp; Freq. [Hz]</text>
<text x="758.1" y="216.0" font-size="12.7" font-weight="normal" fill="#8E8674" text-anchor="start" textLength="44.4" lengthAdjust="spacingAndGlyphs" >Fill Time</text>
<text x="817.0" y="216.0" font-size="12.7" font-weight="normal" fill="#8E8674" text-anchor="start" textLength="57.0" lengthAdjust="spacingAndGlyphs" >Store Time</text>
<text x="886.9" y="216.0" font-size="12.7" font-weight="normal" fill="#8E8674" text-anchor="start" textLength="62.0" lengthAdjust="spacingAndGlyphs" >Dump Time</text>
<text x="762.3" y="237.0" font-size="12.7" font-weight="normal" fill="#8E8674" text-anchor="start" textLength="28.2" lengthAdjust="spacingAndGlyphs" >0.100</text>
<text x="821.5" y="237.0" font-size="12.7" font-weight="normal" fill="#8E8674" text-anchor="start" textLength="28.2" lengthAdjust="spacingAndGlyphs" >0.010</text>
<text x="891.5" y="237.0" font-size="12.7" font-weight="normal" fill="#8E8674" text-anchor="start" textLength="28.2" lengthAdjust="spacingAndGlyphs" >0.001</text>
<text x="785.9" y="257.7" font-size="12.7" font-weight="normal" fill="#8E8674" text-anchor="start" textLength="44.0" lengthAdjust="spacingAndGlyphs" >Fill Freq.</text>
<text x="866.8" y="257.7" font-size="12.7" font-weight="normal" fill="#8E8674" text-anchor="start" textLength="56.5" lengthAdjust="spacingAndGlyphs" >Store Freq.</text>
<text x="790.5" y="278.5" font-size="12.7" font-weight="normal" fill="#8E8674" text-anchor="start" textLength="48.0" lengthAdjust="spacingAndGlyphs" >4.500E+6</text>
<text x="871.8" y="278.5" font-size="12.7" font-weight="normal" fill="#8E8674" text-anchor="start" textLength="47.7" lengthAdjust="spacingAndGlyphs" >5.100E+6</text>
<text x="740.7" y="302.6" font-size="12.7" font-weight="normal" fill="#000" text-anchor="start" textLength="51.8" lengthAdjust="spacingAndGlyphs" >Messages</text>
<text x="741.1" y="522.0" font-size="12.7" font-weight="normal" fill="#000" text-anchor="start" textLength="127.0" lengthAdjust="spacingAndGlyphs" >Gamma Ray Count [1/s]</text>
<text x="745.4" y="544.4" font-size="13" font-weight="bold" fill="#000" text-anchor="start" textLength="47.1" lengthAdjust="spacingAndGlyphs" >9302.54</text>
<g shape-rendering="crispEdges">
<rect x="86" y="589" width="212" height="269" fill="#000" />
<rect x="86" y="846" width="212" height="1" fill="#585800"/>
<rect x="86" y="835" width="212" height="1" fill="#585800"/>
<rect x="86" y="828" width="212" height="1" fill="#585800"/>
<rect x="86" y="823" width="212" height="1" fill="#585800"/>
<rect x="86" y="808" width="212" height="1" fill="#585800"/>
<rect x="86" y="796" width="212" height="1" fill="#585800"/>
<rect x="86" y="790" width="212" height="1" fill="#585800"/>
<rect x="86" y="785" width="212" height="1" fill="#585800"/>
<rect x="86" y="770" width="212" height="1" fill="#585800"/>
<rect x="86" y="758" width="212" height="1" fill="#585800"/>
<rect x="86" y="751" width="212" height="1" fill="#585800"/>
<rect x="86" y="746" width="212" height="1" fill="#585800"/>
<rect x="86" y="731" width="212" height="1" fill="#585800"/>
<rect x="86" y="720" width="212" height="1" fill="#585800"/>
<rect x="86" y="713" width="212" height="1" fill="#585800"/>
<rect x="86" y="708" width="212" height="1" fill="#585800"/>
<rect x="86" y="693" width="212" height="1" fill="#585800"/>
<rect x="86" y="681" width="212" height="1" fill="#585800"/>
<rect x="86" y="674" width="212" height="1" fill="#585800"/>
<rect x="86" y="670" width="212" height="1" fill="#585800"/>
<rect x="86" y="654" width="212" height="1" fill="#585800"/>
<rect x="86" y="643" width="212" height="1" fill="#585800"/>
<rect x="86" y="636" width="212" height="1" fill="#585800"/>
<rect x="86" y="631" width="212" height="1" fill="#585800"/>
<rect x="86" y="616" width="212" height="1" fill="#585800"/>
<rect x="86" y="604" width="212" height="1" fill="#585800"/>
<rect x="86" y="598" width="212" height="1" fill="#585800"/>
<rect x="86" y="593" width="212" height="1" fill="#585800"/>
<rect x="95" y="589" width="1" height="269" fill="#585800"/>
<rect x="103" y="589" width="1" height="269" fill="#585800"/>
<rect x="110" y="589" width="1" height="269" fill="#585800"/>
<rect x="118" y="589" width="1" height="269" fill="#585800"/>
<rect x="125" y="589" width="1" height="269" fill="#585800"/>
<rect x="140" y="589" width="1" height="269" fill="#585800"/>
<rect x="148" y="589" width="1" height="269" fill="#585800"/>
<rect x="156" y="589" width="1" height="269" fill="#585800"/>
<rect x="163" y="589" width="1" height="269" fill="#585800"/>
<rect x="171" y="589" width="1" height="269" fill="#585800"/>
<rect x="186" y="589" width="1" height="269" fill="#585800"/>
<rect x="194" y="589" width="1" height="269" fill="#585800"/>
<rect x="201" y="589" width="1" height="269" fill="#585800"/>
<rect x="209" y="589" width="1" height="269" fill="#585800"/>
<rect x="216" y="589" width="1" height="269" fill="#585800"/>
<rect x="231" y="589" width="1" height="269" fill="#585800"/>
<rect x="239" y="589" width="1" height="269" fill="#585800"/>
<rect x="247" y="589" width="1" height="269" fill="#585800"/>
<rect x="254" y="589" width="1" height="269" fill="#585800"/>
<rect x="262" y="589" width="1" height="269" fill="#585800"/>
<rect x="277" y="589" width="1" height="269" fill="#585800"/>
<rect x="285" y="589" width="1" height="269" fill="#585800"/>
<rect x="292" y="589" width="1" height="269" fill="#585800"/>
<rect x="79" y="857" width="6" height="1" fill="#000"/>
<rect x="86" y="820" width="212" height="1" fill="#989800"/>
<rect x="79" y="820" width="6" height="1" fill="#000"/>
<rect x="86" y="781" width="212" height="1" fill="#989800"/>
<rect x="79" y="781" width="6" height="1" fill="#000"/>
<rect x="86" y="743" width="212" height="1" fill="#989800"/>
<rect x="79" y="743" width="6" height="1" fill="#000"/>
<rect x="86" y="704" width="212" height="1" fill="#989800"/>
<rect x="79" y="704" width="6" height="1" fill="#000"/>
<rect x="86" y="666" width="212" height="1" fill="#989800"/>
<rect x="79" y="666" width="6" height="1" fill="#000"/>
<rect x="86" y="627" width="212" height="1" fill="#989800"/>
<rect x="79" y="627" width="6" height="1" fill="#000"/>
<rect x="79" y="589" width="6" height="1" fill="#000"/>
<rect x="87" y="589" width="1" height="269" fill="#989800"/>
<rect x="133" y="589" width="1" height="269" fill="#989800"/>
<rect x="178" y="589" width="1" height="269" fill="#989800"/>
<rect x="224" y="589" width="1" height="269" fill="#989800"/>
<rect x="269" y="589" width="1" height="269" fill="#989800"/>
<rect x="86" y="858" width="1" height="5" fill="#000"/>
<rect x="133" y="858" width="1" height="5" fill="#000"/>
<rect x="178" y="858" width="1" height="5" fill="#000"/>
<rect x="224" y="858" width="1" height="5" fill="#000"/>
<rect x="269" y="858" width="1" height="5" fill="#000"/>
<rect x="298" y="858" width="1" height="5" fill="#000"/>
</g>
<clipPath id="c1"><rect x="86" y="589" width="212" height="269"/></clipPath><g clip-path="url(#c1)">
<polygon points="86.0,590.5 88.0,590.5 90.0,590.5 92.0,590.5 94.0,590.5 96.0,590.5 98.0,590.5 100.0,590.5 102.0,590.5 104.0,590.5 106.0,590.5 108.0,590.5 110.0,590.5 112.0,590.5 114.0,590.5 116.0,590.5 118.0,590.5 120.0,590.5 122.0,590.5 124.0,590.5 126.0,590.5 128.0,590.5 130.0,590.5 132.0,590.5 134.0,590.5 136.0,590.5 138.0,590.5 140.0,590.5 142.0,590.5 144.0,590.5 146.0,590.5 148.0,590.5 150.0,590.5 152.0,590.5 154.0,590.5 156.0,590.5 158.0,590.5 160.0,590.5 162.0,590.5 164.0,590.5 166.0,590.5 168.0,590.5 170.0,590.5 172.0,590.5 174.0,590.5 176.0,590.5 178.0,590.5 180.0,590.5 182.0,590.5 184.0,590.5 186.0,590.5 188.0,590.5 190.0,590.5 192.0,590.5 194.0,590.5 196.0,590.5 198.0,590.5 200.0,590.5 202.0,590.5 204.0,590.5 206.0,590.5 208.0,590.5 210.0,590.5 212.0,590.5 214.0,590.5 216.0,590.5 218.0,590.5 220.0,590.5 222.0,590.5 224.0,590.5 226.0,590.5 228.0,590.5 230.0,590.5 232.0,590.5 234.0,590.5 236.0,590.5 238.0,590.5 240.0,590.5 242.0,590.5 244.0,590.5 246.0,590.5 248.0,590.5 250.0,590.5 252.0,590.5 254.0,590.5 256.0,590.5 258.0,590.5 260.0,590.5 262.0,590.5 264.0,590.5 266.0,590.5 268.0,590.5 270.0,590.5 272.0,590.5 274.0,590.5 276.0,590.5 278.0,590.5 280.0,590.5 282.0,590.5 284.0,590.5 286.0,590.5 288.0,590.5 290.0,590.5 292.0,590.5 294.0,590.5 296.0,590.5 298.0,590.5 298.0,590.5 298.0,596.5 296.0,596.5 294.0,596.7 292.0,597.1 290.0,596.8 288.0,596.6 286.0,596.7 284.0,596.8 282.0,596.2 280.0,597.0 278.0,596.9 276.0,597.0 274.0,596.9 272.0,596.5 270.0,596.5 268.0,596.2 266.0,596.7 264.0,596.2 262.0,596.2 260.0,596.3 258.0,596.3 256.0,596.4 254.0,596.2 252.0,596.1 250.0,596.3 248.0,596.2 246.0,596.5 244.0,596.1 242.0,597.0 240.0,596.7 238.0,596.2 236.0,596.4 234.0,596.4 232.0,596.5 230.0,596.2 228.0,596.9 226.0,597.1 224.0,596.6 222.0,596.6 220.0,596.2 218.0,596.2 216.0,596.4 214.0,596.4 212.0,596.9 210.0,596.3 208.0,596.1 206.0,597.1 204.0,596.6 202.0,596.2 200.0,596.6 198.0,596.1 196.0,596.6 194.0,597.1 192.0,597.0 190.0,596.8 188.0,596.4 186.0,596.5 184.0,596.3 182.0,596.9 180.0,596.6 178.0,596.9 176.0,596.4 174.0,596.3 172.0,596.9 170.0,597.1 168.0,597.0 166.0,596.9 164.0,596.9 162.0,596.8 160.0,596.3 158.0,596.6 156.0,596.5 154.0,596.1 152.0,596.1 150.0,596.4 148.0,596.4 146.0,596.8 144.0,597.1 142.0,596.5 140.0,597.0 138.0,597.1 136.0,597.1 134.0,596.5 132.0,596.3 130.0,596.3 128.0,596.3 126.0,596.3 124.0,596.7 122.0,597.0 120.0,596.9 118.0,596.6 116.0,596.8 114.0,596.9 112.0,596.2 110.0,596.8 108.0,597.0 106.0,596.9 104.0,596.9 102.0,596.6 100.0,596.3 98.0,596.9 96.0,596.4 94.0,596.9 92.0,597.1 90.0,596.5 88.0,596.5 86.0,597.0 86.0,596.6" fill="#FFFF80"/>
<polygon points="86.0,613.8 88.0,613.8 90.0,613.8 92.0,613.8 94.0,613.8 96.0,613.8 98.0,613.8 100.0,613.8 102.0,613.8 104.0,613.8 106.0,613.8 108.0,613.8 110.0,613.8 112.0,613.8 114.0,613.8 116.0,613.8 118.0,613.8 120.0,613.8 122.0,613.8 124.0,613.8 126.0,613.8 128.0,613.8 130.0,613.8 132.0,613.8 134.0,613.8 136.0,613.8 138.0,613.8 140.0,613.8 142.0,613.8 144.0,613.8 146.0,613.8 148.0,613.8 150.0,613.8 152.0,613.8 154.0,613.8 156.0,613.8 158.0,613.8 160.0,613.8 162.0,613.8 164.0,613.8 166.0,613.8 168.0,613.8 170.0,613.8 172.0,613.8 174.0,613.8 176.0,613.8 178.0,613.8 180.0,613.8 182.0,613.8 184.0,613.8 186.0,613.8 188.0,613.8 190.0,613.8 192.0,613.8 194.0,613.8 196.0,613.8 198.0,613.8 200.0,613.8 202.0,613.8 204.0,613.8 206.0,613.8 208.0,613.8 210.0,613.8 212.0,613.8 214.0,613.8 216.0,613.8 218.0,613.8 220.0,613.8 222.0,613.8 224.0,613.8 226.0,613.8 228.0,613.8 230.0,613.8 232.0,613.8 234.0,613.8 236.0,613.8 238.0,613.8 240.0,613.8 242.0,613.8 244.0,613.8 246.0,613.8 248.0,613.8 250.0,613.8 252.0,613.8 254.0,613.8 256.0,613.8 258.0,613.8 260.0,613.8 262.0,613.8 264.0,613.8 266.0,613.8 268.0,613.8 270.0,613.8 272.0,613.8 274.0,613.8 276.0,613.8 278.0,613.8 280.0,613.8 282.0,613.8 284.0,613.8 286.0,613.8 288.0,613.8 290.0,613.8 292.0,613.8 294.0,613.8 296.0,613.8 298.0,613.8 298.0,613.8 298.0,619.0 296.0,618.8 294.0,618.9 292.0,619.0 290.0,619.0 288.0,618.8 286.0,619.2 284.0,619.1 282.0,619.2 280.0,618.8 278.0,618.9 276.0,618.8 274.0,619.1 272.0,618.9 270.0,618.9 268.0,619.0 266.0,619.2 264.0,619.1 262.0,618.9 260.0,618.9 258.0,619.2 256.0,619.0 254.0,619.1 252.0,618.8 250.0,618.8 248.0,619.1 246.0,619.0 244.0,618.8 242.0,619.2 240.0,619.1 238.0,619.1 236.0,618.8 234.0,619.1 232.0,618.8 230.0,619.1 228.0,619.0 226.0,618.9 224.0,619.0 222.0,619.2 220.0,618.9 218.0,618.9 216.0,619.0 214.0,618.9 212.0,618.8 210.0,618.9 208.0,618.8 206.0,618.9 204.0,618.9 202.0,618.9 200.0,619.1 198.0,618.9 196.0,619.0 194.0,618.9 192.0,618.9 190.0,618.8 188.0,618.9 186.0,618.8 184.0,619.1 182.0,619.0 180.0,618.9 178.0,619.0 176.0,619.2 174.0,618.8 172.0,619.1 170.0,619.0 168.0,619.0 166.0,619.1 164.0,619.0 162.0,619.0 160.0,619.1 158.0,619.2 156.0,618.9 154.0,619.1 152.0,619.1 150.0,619.1 148.0,619.0 146.0,618.9 144.0,618.8 142.0,618.9 140.0,618.8 138.0,619.1 136.0,618.9 134.0,618.9 132.0,618.8 130.0,619.1 128.0,619.1 126.0,619.1 124.0,618.9 122.0,618.9 120.0,618.9 118.0,619.0 116.0,618.9 114.0,619.0 112.0,618.9 110.0,619.2 108.0,619.2 106.0,619.0 104.0,618.9 102.0,619.2 100.0,618.9 98.0,618.9 96.0,618.8 94.0,619.0 92.0,619.0 90.0,619.0 88.0,618.9 86.0,619.0 86.0,619.0" fill="#55FF44"/>
<rect x="96" y="610.3" width="4" height="5" rx="2" fill="#55FF44"/>
<rect x="108" y="610.3" width="5" height="5" rx="2" fill="#55FF44"/>
<rect x="115" y="610.3" width="6" height="5" rx="2" fill="#55FF44"/>
<rect x="124" y="610.3" width="4" height="5" rx="2" fill="#55FF44"/>
<rect x="131" y="610.3" width="4" height="5" rx="2" fill="#55FF44"/>
<rect x="141" y="610.3" width="5" height="5" rx="2" fill="#55FF44"/>
<rect x="148" y="610.3" width="5" height="5" rx="2" fill="#55FF44"/>
<rect x="155" y="610.3" width="6" height="5" rx="2" fill="#55FF44"/>
<rect x="162" y="610.3" width="7" height="5" rx="2" fill="#55FF44"/>
<rect x="170" y="610.3" width="5" height="5" rx="2" fill="#55FF44"/>
<rect x="176" y="610.3" width="5" height="5" rx="2" fill="#55FF44"/>
<rect x="251" y="610.3" width="5" height="5" rx="2" fill="#55FF44"/>
<rect x="271" y="610.3" width="5" height="5" rx="2" fill="#55FF44"/>
<rect x="277" y="610.3" width="6" height="5" rx="2" fill="#55FF44"/>
<circle cx="207" cy="621.5" r="2.4" fill="#55FF44"/>
<polygon points="86.0,835.8 88.0,835.9 90.0,835.8 92.0,836.0 94.0,835.8 96.0,835.8 98.0,835.9 100.0,835.9 102.0,836.0 104.0,836.0 106.0,836.1 108.0,836.1 110.0,836.1 112.0,836.2 114.0,836.0 116.0,835.9 118.0,836.2 120.0,835.9 122.0,836.1 124.0,836.1 126.0,835.8 128.0,836.1 130.0,836.2 132.0,836.1 134.0,836.1 136.0,836.1 138.0,835.9 140.0,836.0 142.0,836.0 144.0,836.1 146.0,836.1 148.0,836.1 150.0,836.0 152.0,836.2 154.0,836.1 156.0,836.1 158.0,835.9 160.0,835.8 162.0,835.9 164.0,835.9 166.0,835.8 168.0,836.1 170.0,836.0 172.0,836.1 174.0,836.1 176.0,836.1 178.0,836.0 180.0,835.8 182.0,836.1 184.0,836.1 186.0,836.0 188.0,836.0 190.0,836.1 192.0,835.8 194.0,836.1 196.0,835.9 198.0,835.8 200.0,835.9 202.0,836.1 204.0,835.9 206.0,836.1 208.0,836.2 210.0,836.0 212.0,836.0 214.0,836.0 216.0,836.1 218.0,836.1 220.0,836.0 222.0,836.1 224.0,835.8 226.0,835.9 228.0,835.9 230.0,836.1 232.0,835.9 234.0,836.0 236.0,835.8 238.0,835.8 240.0,835.9 242.0,836.1 244.0,836.1 246.0,836.1 248.0,835.9 250.0,836.0 252.0,836.0 254.0,836.0 256.0,835.8 258.0,836.2 260.0,835.9 262.0,836.2 264.0,836.2 266.0,835.8 268.0,836.0 270.0,836.1 272.0,836.2 274.0,836.0 276.0,835.9 278.0,835.9 280.0,836.2 282.0,835.9 284.0,836.0 286.0,835.9 288.0,836.0 290.0,836.2 292.0,835.9 294.0,836.1 296.0,836.0 298.0,836.2 298.0,836.0 298.0,842.1 296.0,841.8 294.0,842.2 292.0,842.0 290.0,841.7 288.0,841.7 286.0,842.0 284.0,842.0 282.0,841.9 280.0,841.8 278.0,841.9 276.0,841.9 274.0,842.2 272.0,841.7 270.0,842.2 268.0,842.2 266.0,841.8 264.0,842.3 262.0,842.1 260.0,842.2 258.0,841.9 256.0,841.9 254.0,841.9 252.0,842.3 250.0,842.1 248.0,841.9 246.0,842.0 244.0,841.9 242.0,841.7 240.0,841.8 238.0,842.2 236.0,841.9 234.0,842.3 232.0,841.8 230.0,841.9 228.0,842.0 226.0,841.8 224.0,841.9 222.0,842.3 220.0,842.2 218.0,842.2 216.0,842.1 214.0,842.2 212.0,842.3 210.0,842.0 208.0,842.1 206.0,841.7 204.0,842.1 202.0,842.0 200.0,842.2 198.0,842.1 196.0,841.9 194.0,841.7 192.0,842.3 190.0,841.8 188.0,842.0 186.0,841.9 184.0,841.9 182.0,842.1 180.0,842.3 178.0,841.9 176.0,842.1 174.0,841.9 172.0,842.0 170.0,841.9 168.0,841.8 166.0,841.8 164.0,841.8 162.0,842.2 160.0,842.0 158.0,841.8 156.0,842.2 154.0,842.3 152.0,842.0 150.0,841.8 148.0,841.8 146.0,841.8 144.0,841.9 142.0,841.8 140.0,841.8 138.0,841.9 136.0,842.0 134.0,842.2 132.0,842.1 130.0,841.9 128.0,841.9 126.0,842.0 124.0,841.9 122.0,841.9 120.0,841.7 118.0,841.9 116.0,842.3 114.0,841.8 112.0,842.0 110.0,842.1 108.0,842.2 106.0,841.8 104.0,841.9 102.0,841.8 100.0,841.9 98.0,842.0 96.0,842.3 94.0,842.2 92.0,842.2 90.0,841.7 88.0,841.7 86.0,842.1 86.0,842.0" fill="#D4B4AA"/>
<polygon points="86.0,809.8 88.0,809.5 90.0,809.7 92.0,809.3 94.0,809.7 96.0,810.2 98.0,810.2 100.0,810.2 102.0,810.4 104.0,809.9 106.0,809.8 108.0,809.9 110.0,810.3 112.0,810.5 114.0,810.8 116.0,810.7 118.0,810.7 120.0,810.8 122.0,810.7 124.0,810.8 126.0,810.5 128.0,811.1 130.0,810.7 132.0,811.4 134.0,811.2 136.0,811.0 138.0,810.9 140.0,811.1 142.0,811.5 144.0,811.6 146.0,811.2 148.0,811.2 150.0,811.6 152.0,811.7 154.0,811.7 156.0,811.6 158.0,812.0 160.0,811.6 162.0,811.9 164.0,812.0 166.0,812.5 168.0,812.3 170.0,812.6 172.0,812.3 174.0,812.2 176.0,812.3 178.0,812.9 180.0,812.8 182.0,812.5 184.0,812.4 186.0,812.8 188.0,813.0 190.0,812.9 192.0,812.8 194.0,813.2 196.0,813.5 198.0,813.0 200.0,812.9 202.0,813.2 204.0,813.3 206.0,813.6 208.0,813.3 210.0,813.8 212.0,813.9 214.0,813.7 216.0,813.6 218.0,814.2 220.0,813.8 222.0,814.2 224.0,813.8 226.0,813.9 228.0,814.4 230.0,814.1 232.0,814.7 234.0,814.4 236.0,814.2 238.0,814.3 240.0,814.5 242.0,814.8 244.0,815.1 246.0,814.5 248.0,814.8 250.0,814.7 252.0,815.4 254.0,814.8 256.0,814.8 258.0,814.8 260.0,815.2 262.0,815.6 264.0,815.7 266.0,815.6 268.0,815.9 270.0,815.9 272.0,815.5 274.0,815.5 276.0,816.1 278.0,816.0 280.0,815.5 282.0,816.1 284.0,815.9 286.0,816.0 288.0,816.0 290.0,816.0 292.0,815.9 294.0,816.2 296.0,816.3 298.0,816.9 298.0,822.5 296.0,822.8 294.0,821.9 292.0,821.8 290.0,822.3 288.0,822.4 286.0,821.9 284.0,821.5 282.0,822.1 280.0,821.4 278.0,822.5 276.0,821.8 274.0,821.3 272.0,821.9 270.0,821.5 268.0,821.8 266.0,821.9 264.0,822.0 262.0,821.2 260.0,820.7 258.0,820.4 256.0,821.2 254.0,820.5 252.0,821.6 250.0,821.1 248.0,820.6 246.0,820.3 244.0,821.5 242.0,820.9 240.0,820.3 238.0,820.5 236.0,820.0 234.0,820.2 232.0,820.2 230.0,820.3 228.0,820.8 226.0,820.0 224.0,820.3 222.0,819.8 220.0,819.5 218.0,820.2 216.0,820.0 214.0,820.2 212.0,819.7 210.0,819.6 208.0,819.2 206.0,819.6 204.0,819.8 202.0,818.9 200.0,819.2 198.0,819.2 196.0,819.8 194.0,819.5 192.0,818.9 190.0,818.7 188.0,818.8 186.0,818.7 184.0,818.6 182.0,818.1 180.0,818.5 178.0,819.2 176.0,818.0 174.0,817.8 172.0,817.9 170.0,818.6 168.0,818.1 166.0,819.0 164.0,818.4 162.0,818.3 160.0,817.3 158.0,817.5 156.0,817.2 154.0,817.7 152.0,818.0 150.0,817.6 148.0,816.9 146.0,817.1 144.0,817.7 142.0,817.6 140.0,817.3 138.0,817.3 136.0,817.2 134.0,816.8 132.0,817.7 130.0,816.5 128.0,817.2 126.0,816.3 124.0,817.0 122.0,816.4 120.0,816.6 118.0,816.4 116.0,816.3 114.0,817.2 112.0,816.6 110.0,816.1 108.0,815.8 106.0,816.3 104.0,815.9 102.0,816.1 100.0,816.6 98.0,816.3 96.0,816.7 94.0,815.3 92.0,815.3 90.0,816.0 88.0,815.9 86.0,816.2" fill="#5A78EE"/>
<rect x="100.9" y="757" width="3.2" height="54" rx="1.5" fill="#5A78EE"/>
<circle cx="102.5" cy="765" r="2.2" fill="#5A78EE"/>
<circle cx="102.5" cy="770" r="2.2" fill="#5A78EE"/>
<circle cx="102.5" cy="775" r="2.2" fill="#5A78EE"/>
<circle cx="102.5" cy="783" r="2.2" fill="#5A78EE"/>
<circle cx="102.5" cy="758.5" r="2.8" fill="#5A78EE"/>
<rect x="250.9" y="757" width="3.2" height="61" rx="1.5" fill="#5A78EE"/>
<circle cx="252.5" cy="765" r="2.2" fill="#5A78EE"/>
<circle cx="252.5" cy="770" r="2.2" fill="#5A78EE"/>
<circle cx="252.5" cy="775" r="2.2" fill="#5A78EE"/>
<circle cx="252.5" cy="783" r="2.2" fill="#5A78EE"/>
<circle cx="252.5" cy="758.5" r="2.8" fill="#5A78EE"/>
<polygon points="86.0,798.7 88.0,798.8 90.0,799.3 92.0,799.3 94.0,799.2 96.0,798.9 98.0,799.3 100.0,799.1 102.0,798.8 104.0,798.8 106.0,798.9 108.0,799.1 110.0,798.7 112.0,799.1 114.0,798.9 116.0,799.2 118.0,798.7 120.0,798.9 122.0,799.1 124.0,798.8 126.0,798.9 128.0,798.9 130.0,798.9 132.0,798.9 134.0,799.2 136.0,798.9 138.0,799.1 140.0,798.7 142.0,799.0 144.0,798.9 146.0,799.0 148.0,798.7 150.0,799.1 152.0,798.8 154.0,798.9 156.0,798.8 158.0,799.0 160.0,798.8 162.0,799.2 164.0,798.8 166.0,799.3 168.0,799.0 170.0,799.3 172.0,799.2 174.0,799.2 176.0,799.2 178.0,798.9 180.0,799.2 182.0,798.8 184.0,799.0 186.0,798.8 188.0,799.1 190.0,798.7 192.0,799.2 194.0,799.2 196.0,799.1 198.0,799.1 200.0,799.0 202.0,799.0 204.0,799.0 206.0,798.7 208.0,799.0 210.0,799.2 212.0,799.0 214.0,799.0 216.0,798.8 218.0,798.8 220.0,799.0 222.0,799.1 224.0,799.1 226.0,799.0 228.0,799.0 230.0,799.3 232.0,799.2 234.0,799.1 236.0,798.8 238.0,799.0 240.0,799.2 242.0,799.2 244.0,798.7 246.0,799.2 248.0,799.2 250.0,799.2 252.0,799.0 254.0,798.8 256.0,799.0 258.0,798.7 260.0,798.8 262.0,799.1 264.0,798.8 266.0,798.8 268.0,799.1 270.0,799.2 272.0,799.0 274.0,798.8 276.0,799.1 278.0,799.2 280.0,799.3 282.0,798.9 284.0,799.0 286.0,799.1 288.0,799.2 290.0,799.1 292.0,799.1 294.0,798.9 296.0,798.7 298.0,799.1 298.0,810.4 296.0,810.1 294.0,810.0 292.0,810.7 290.0,811.0 288.0,810.3 286.0,810.0 284.0,810.2 282.0,810.8 280.0,810.6 278.0,810.3 276.0,810.4 274.0,811.0 272.0,810.9 270.0,810.6 268.0,810.4 266.0,810.5 264.0,810.8 262.0,810.9 260.0,810.9 258.0,810.2 256.0,810.3 254.0,810.3 252.0,810.9 250.0,810.1 248.0,810.3 246.0,810.2 244.0,810.4 242.0,810.9 240.0,810.2 238.0,811.0 236.0,811.0 234.0,810.8 232.0,811.0 230.0,810.1 228.0,810.4 226.0,810.1 224.0,810.8 222.0,810.1 220.0,810.0 218.0,810.4 216.0,810.4 214.0,810.1 212.0,810.2 210.0,810.8 208.0,810.2 206.0,810.6 204.0,810.4 202.0,810.7 200.0,810.6 198.0,810.3 196.0,810.6 194.0,810.1 192.0,810.0 190.0,810.6 188.0,810.9 186.0,810.2 184.0,810.4 182.0,810.4 180.0,810.2 178.0,810.8 176.0,810.2 174.0,810.2 172.0,810.5 170.0,810.1 168.0,809.5 166.0,810.2 164.0,809.1 162.0,809.8 160.0,809.1 158.0,809.3 156.0,808.4 154.0,808.4 152.0,808.3 150.0,808.4 148.0,807.8 146.0,807.2 144.0,807.7 142.0,807.4 140.0,807.3 138.0,806.4 136.0,806.2 134.0,806.7 132.0,805.9 130.0,805.9 128.0,806.0 126.0,805.2 124.0,805.3 122.0,804.5 120.0,804.8 118.0,804.1 116.0,804.5 114.0,804.2 112.0,804.2 110.0,804.3 108.0,804.2 106.0,804.6 104.0,804.2 102.0,804.4 100.0,804.6 98.0,804.1 96.0,804.8 94.0,804.4 92.0,804.4 90.0,804.6 88.0,804.2 86.0,804.3" fill="#FF0033"/>
<circle cx="103" cy="808.3" r="1.7" fill="#FF0033"/>
<circle cx="106" cy="808.3" r="1.7" fill="#FF0033"/>
<circle cx="109" cy="808.3" r="1.7" fill="#FF0033"/>
<circle cx="124" cy="808.3" r="1.7" fill="#FF0033"/>
<circle cx="128" cy="808.3" r="1.7" fill="#FF0033"/>
<circle cx="133" cy="808.3" r="1.7" fill="#FF0033"/>
<circle cx="138" cy="808.3" r="1.7" fill="#FF0033"/>
<circle cx="143" cy="808.3" r="1.7" fill="#FF0033"/>
<circle cx="150" cy="808.3" r="1.7" fill="#FF0033"/>
<circle cx="157" cy="808.3" r="1.7" fill="#FF0033"/>
<circle cx="103" cy="797" r="2.5" fill="#FF0033"/><rect x="102.4" y="797" width="1.2" height="5" fill="#FF0033"/>
<circle cx="108.7" cy="797" r="2.5" fill="#FF0033"/><rect x="108.10000000000001" y="797" width="1.2" height="5" fill="#FF0033"/>
<circle cx="121.4" cy="796.7" r="2.5" fill="#FF0033"/><rect x="120.80000000000001" y="796.7" width="1.2" height="5" fill="#FF0033"/>
<circle cx="149.3" cy="797" r="2.5" fill="#FF0033"/><rect x="148.70000000000002" y="797" width="1.2" height="5" fill="#FF0033"/>
<circle cx="200" cy="793.8" r="2.5" fill="#FF0033"/><rect x="199.4" y="793.8" width="1.2" height="5" fill="#FF0033"/>
</g>
<text x="77.2" y="862.8" font-size="12.7" font-weight="normal" fill="#000" text-anchor="end" textLength="37.7" lengthAdjust="spacingAndGlyphs" >1.0E-10</text>
<text x="77.2" y="824.4" font-size="12.7" font-weight="normal" fill="#000" text-anchor="end" textLength="31.4" lengthAdjust="spacingAndGlyphs" >1.0E-9</text>
<text x="77.2" y="785.9" font-size="12.7" font-weight="normal" fill="#000" text-anchor="end" textLength="31.4" lengthAdjust="spacingAndGlyphs" >1.0E-8</text>
<text x="77.2" y="747.5" font-size="12.7" font-weight="normal" fill="#000" text-anchor="end" textLength="31.4" lengthAdjust="spacingAndGlyphs" >1.0E-7</text>
<text x="77.2" y="709.1" font-size="12.7" font-weight="normal" fill="#000" text-anchor="end" textLength="31.4" lengthAdjust="spacingAndGlyphs" >1.0E-6</text>
<text x="77.2" y="670.7" font-size="12.7" font-weight="normal" fill="#000" text-anchor="end" textLength="31.4" lengthAdjust="spacingAndGlyphs" >1.0E-5</text>
<text x="77.2" y="632.2" font-size="12.7" font-weight="normal" fill="#000" text-anchor="end" textLength="31.4" lengthAdjust="spacingAndGlyphs" >1.0E-4</text>
<text x="77.2" y="593.8" font-size="12.7" font-weight="normal" fill="#000" text-anchor="end" textLength="31.4" lengthAdjust="spacingAndGlyphs" >1.0E-3</text>
<text x="73.2" y="878.0" font-size="12.7" font-weight="normal" fill="#000" text-anchor="start" textLength="27.0" lengthAdjust="spacingAndGlyphs" >00:00</text>
<text x="119.4" y="878.0" font-size="12.7" font-weight="normal" fill="#000" text-anchor="start" textLength="27.0" lengthAdjust="spacingAndGlyphs" >02:00</text>
<text x="163.5" y="878.0" font-size="12.7" font-weight="normal" fill="#000" text-anchor="start" textLength="27.0" lengthAdjust="spacingAndGlyphs" >04:00</text>
<text x="209.8" y="878.0" font-size="12.7" font-weight="normal" fill="#000" text-anchor="start" textLength="27.0" lengthAdjust="spacingAndGlyphs" >06:00</text>
<text x="254.5" y="878.0" font-size="12.7" font-weight="normal" fill="#000" text-anchor="start" textLength="27.0" lengthAdjust="spacingAndGlyphs" >08:00</text>
<text x="282.5" y="878.0" font-size="12.7" font-weight="normal" fill="#000" text-anchor="start" textLength="27.0" lengthAdjust="spacingAndGlyphs" >09:12</text>
<text x="191.0" y="894.0" font-size="12.7" font-weight="normal" fill="#000" text-anchor="start" textLength="27.0" lengthAdjust="spacingAndGlyphs" >Time</text>
<g transform="translate(32,722.5) rotate(-90)">
<text x="0.0" y="0.0" font-size="12.7" font-weight="normal" fill="#000" text-anchor="middle" textLength="84.0" lengthAdjust="spacingAndGlyphs" >Pressure (mbar)</text>
</g>
<g shape-rendering="crispEdges">
<rect x="399" y="577" width="233" height="283" fill="#000" />
<rect x="399" y="584" width="233" height="1" fill="#585800"/>
<rect x="399" y="591" width="233" height="1" fill="#585800"/>
<rect x="399" y="598" width="233" height="1" fill="#585800"/>
<rect x="399" y="605" width="233" height="1" fill="#585800"/>
<rect x="399" y="619" width="233" height="1" fill="#585800"/>
<rect x="399" y="626" width="233" height="1" fill="#585800"/>
<rect x="399" y="633" width="233" height="1" fill="#585800"/>
<rect x="399" y="640" width="233" height="1" fill="#585800"/>
<rect x="399" y="655" width="233" height="1" fill="#585800"/>
<rect x="399" y="662" width="233" height="1" fill="#585800"/>
<rect x="399" y="669" width="233" height="1" fill="#585800"/>
<rect x="399" y="676" width="233" height="1" fill="#585800"/>
<rect x="399" y="690" width="233" height="1" fill="#585800"/>
<rect x="399" y="697" width="233" height="1" fill="#585800"/>
<rect x="399" y="704" width="233" height="1" fill="#585800"/>
<rect x="399" y="711" width="233" height="1" fill="#585800"/>
<rect x="399" y="725" width="233" height="1" fill="#585800"/>
<rect x="399" y="733" width="233" height="1" fill="#585800"/>
<rect x="399" y="740" width="233" height="1" fill="#585800"/>
<rect x="399" y="747" width="233" height="1" fill="#585800"/>
<rect x="399" y="761" width="233" height="1" fill="#585800"/>
<rect x="399" y="768" width="233" height="1" fill="#585800"/>
<rect x="399" y="775" width="233" height="1" fill="#585800"/>
<rect x="399" y="782" width="233" height="1" fill="#585800"/>
<rect x="399" y="796" width="233" height="1" fill="#585800"/>
<rect x="399" y="803" width="233" height="1" fill="#585800"/>
<rect x="399" y="810" width="233" height="1" fill="#585800"/>
<rect x="399" y="817" width="233" height="1" fill="#585800"/>
<rect x="399" y="832" width="233" height="1" fill="#585800"/>
<rect x="399" y="839" width="233" height="1" fill="#585800"/>
<rect x="399" y="846" width="233" height="1" fill="#585800"/>
<rect x="399" y="853" width="233" height="1" fill="#585800"/>
<rect x="405" y="577" width="1" height="283" fill="#585800"/>
<rect x="410" y="577" width="1" height="283" fill="#585800"/>
<rect x="415" y="577" width="1" height="283" fill="#585800"/>
<rect x="420" y="577" width="1" height="283" fill="#585800"/>
<rect x="425" y="577" width="1" height="283" fill="#585800"/>
<rect x="430" y="577" width="1" height="283" fill="#585800"/>
<rect x="435" y="577" width="1" height="283" fill="#585800"/>
<rect x="446" y="577" width="1" height="283" fill="#585800"/>
<rect x="451" y="577" width="1" height="283" fill="#585800"/>
<rect x="456" y="577" width="1" height="283" fill="#585800"/>
<rect x="461" y="577" width="1" height="283" fill="#585800"/>
<rect x="466" y="577" width="1" height="283" fill="#585800"/>
<rect x="471" y="577" width="1" height="283" fill="#585800"/>
<rect x="476" y="577" width="1" height="283" fill="#585800"/>
<rect x="487" y="577" width="1" height="283" fill="#585800"/>
<rect x="492" y="577" width="1" height="283" fill="#585800"/>
<rect x="497" y="577" width="1" height="283" fill="#585800"/>
<rect x="502" y="577" width="1" height="283" fill="#585800"/>
<rect x="507" y="577" width="1" height="283" fill="#585800"/>
<rect x="512" y="577" width="1" height="283" fill="#585800"/>
<rect x="517" y="577" width="1" height="283" fill="#585800"/>
<rect x="528" y="577" width="1" height="283" fill="#585800"/>
<rect x="533" y="577" width="1" height="283" fill="#585800"/>
<rect x="538" y="577" width="1" height="283" fill="#585800"/>
<rect x="543" y="577" width="1" height="283" fill="#585800"/>
<rect x="548" y="577" width="1" height="283" fill="#585800"/>
<rect x="553" y="577" width="1" height="283" fill="#585800"/>
<rect x="558" y="577" width="1" height="283" fill="#585800"/>
<rect x="569" y="577" width="1" height="283" fill="#585800"/>
<rect x="574" y="577" width="1" height="283" fill="#585800"/>
<rect x="579" y="577" width="1" height="283" fill="#585800"/>
<rect x="584" y="577" width="1" height="283" fill="#585800"/>
<rect x="589" y="577" width="1" height="283" fill="#585800"/>
<rect x="594" y="577" width="1" height="283" fill="#585800"/>
<rect x="599" y="577" width="1" height="283" fill="#585800"/>
<rect x="610" y="577" width="1" height="283" fill="#585800"/>
<rect x="615" y="577" width="1" height="283" fill="#585800"/>
<rect x="620" y="577" width="1" height="283" fill="#585800"/>
<rect x="625" y="577" width="1" height="283" fill="#585800"/>
<rect x="630" y="577" width="1" height="283" fill="#585800"/>
<rect x="393" y="577" width="5" height="1" fill="#000"/>
<rect x="399" y="612" width="233" height="1" fill="#989800"/>
<rect x="393" y="612" width="5" height="1" fill="#000"/>
<rect x="399" y="648" width="233" height="1" fill="#989800"/>
<rect x="393" y="648" width="5" height="1" fill="#000"/>
<rect x="399" y="683" width="233" height="1" fill="#989800"/>
<rect x="393" y="683" width="5" height="1" fill="#000"/>
<rect x="399" y="718" width="233" height="1" fill="#989800"/>
<rect x="393" y="718" width="5" height="1" fill="#000"/>
<rect x="399" y="754" width="233" height="1" fill="#989800"/>
<rect x="393" y="754" width="5" height="1" fill="#000"/>
<rect x="399" y="789" width="233" height="1" fill="#989800"/>
<rect x="393" y="789" width="5" height="1" fill="#000"/>
<rect x="399" y="825" width="233" height="1" fill="#989800"/>
<rect x="393" y="825" width="5" height="1" fill="#000"/>
<rect x="393" y="859" width="5" height="1" fill="#000"/>
<rect x="440" y="577" width="1" height="283" fill="#989800"/>
<rect x="481" y="577" width="1" height="283" fill="#989800"/>
<rect x="522" y="577" width="1" height="283" fill="#989800"/>
<rect x="563" y="577" width="1" height="283" fill="#989800"/>
<rect x="604" y="577" width="1" height="283" fill="#989800"/>
<rect x="399" y="860" width="1" height="5" fill="#000"/>
<rect x="440" y="860" width="1" height="5" fill="#000"/>
<rect x="481" y="860" width="1" height="5" fill="#000"/>
<rect x="522" y="860" width="1" height="5" fill="#000"/>
<rect x="563" y="860" width="1" height="5" fill="#000"/>
<rect x="605" y="860" width="1" height="5" fill="#000"/>
<rect x="631" y="860" width="1" height="5" fill="#000"/>
</g>
<clipPath id="c2"><rect x="399" y="577" width="233" height="283"/></clipPath><g clip-path="url(#c2)">
<polygon points="441.0,578.3 443.0,578.7 445.0,577.9 447.0,578.0 449.0,578.5 451.0,577.8 453.0,577.8 455.0,578.2 457.0,577.9 459.0,578.2 461.0,578.0 463.0,578.4 465.0,578.4 467.0,578.0 469.0,578.4 471.0,578.3 473.0,577.9 475.0,578.7 477.0,578.0 479.0,577.9 481.0,577.9 483.0,578.4 485.0,578.7 487.0,578.6 489.0,578.2 491.0,578.1 493.0,577.8 495.0,578.4 497.0,578.4 499.0,578.2 501.0,578.4 503.0,578.2 505.0,578.7 507.0,578.5 509.0,578.0 511.0,578.7 513.0,577.8 515.0,578.3 517.0,578.2 519.0,578.0 521.0,577.9 523.0,578.6 525.0,577.8 527.0,578.4 529.0,578.7 531.0,577.9 533.0,578.0 535.0,578.4 537.0,578.3 539.0,578.4 541.0,578.6 543.0,578.0 545.0,578.1 547.0,578.1 549.0,577.8 551.0,578.7 553.0,578.6 555.0,578.5 557.0,577.8 559.0,578.6 561.0,578.5 563.0,578.3 565.0,578.5 567.0,578.3 569.0,578.0 571.0,577.9 573.0,578.0 575.0,577.8 577.0,578.1 579.0,578.5 581.0,578.5 583.0,578.6 585.0,578.5 587.0,578.1 589.0,578.4 591.0,578.2 593.0,578.6 595.0,578.3 597.0,578.1 599.0,578.4 601.0,578.8 603.0,578.0 605.0,578.7 607.0,577.8 609.0,578.1 611.0,578.0 613.0,578.5 615.0,578.7 617.0,578.5 619.0,578.1 621.0,578.7 623.0,578.1 625.0,578.0 627.0,578.7 629.0,578.4 631.0,578.5 632.0,578.3 632.0,590.7 630.0,591.0 628.0,590.5 626.0,590.8 624.0,590.7 622.0,590.9 620.0,590.4 618.0,590.7 616.0,590.6 614.0,590.3 612.0,590.2 610.0,590.6 608.0,590.1 606.0,590.9 604.0,590.1 602.0,590.0 600.0,590.1 598.0,590.9 596.0,590.3 594.0,590.1 592.0,590.0 590.0,590.0 588.0,590.7 586.0,590.6 584.0,590.7 582.0,590.7 580.0,590.1 578.0,590.6 576.0,590.4 574.0,590.8 572.0,590.8 570.0,590.9 568.0,590.1 566.0,590.9 564.0,590.9 562.0,590.9 560.0,590.1 558.0,590.2 556.0,590.1 554.0,590.0 552.0,590.8 550.0,590.8 548.0,590.6 546.0,590.8 544.0,590.6 542.0,590.3 540.0,590.1 538.0,590.1 536.0,590.8 534.0,590.2 532.0,590.3 530.0,590.4 528.0,590.0 526.0,590.3 524.0,590.3 522.0,590.7 520.0,590.4 518.0,590.3 516.0,591.0 514.0,590.5 512.0,590.9 510.0,590.6 508.0,590.0 506.0,590.4 504.0,590.4 502.0,590.8 500.0,590.3 498.0,590.7 496.0,590.5 494.0,590.2 492.0,590.9 490.0,590.1 488.0,590.8 486.0,590.2 484.0,590.0 482.0,590.2 480.0,590.8 478.0,591.0 476.0,590.0 474.0,590.5 472.0,590.5 470.0,590.8 468.0,590.2 466.0,590.5 464.0,590.3 462.0,590.8 460.0,590.3 458.0,590.9 456.0,590.3 454.0,590.2 452.0,590.7 450.0,590.5 448.0,590.1 446.0,590.6 444.0,590.1 442.0,590.8 441.0,590.5" fill="#00FFC8"/>
<polygon points="441.0,589.7 443.0,589.8 445.0,589.7 447.0,589.3 449.0,589.4 451.0,589.4 453.0,590.0 455.0,589.0 457.0,590.0 459.0,588.9 461.0,589.1 463.0,589.2 465.0,590.0 467.0,589.5 469.0,589.4 471.0,590.0 473.0,589.2 475.0,589.5 477.0,589.5 479.0,589.8 481.0,589.8 483.0,589.7 485.0,589.3 487.0,589.3 489.0,589.1 491.0,589.9 493.0,589.7 495.0,589.8 497.0,589.1 499.0,589.4 501.0,589.8 503.0,589.6 505.0,589.1 507.0,589.5 509.0,590.0 511.0,589.2 513.0,589.1 515.0,589.3 517.0,589.7 519.0,589.9 521.0,589.1 523.0,589.1 525.0,589.2 527.0,589.3 529.0,589.5 531.0,589.1 533.0,589.3 535.0,589.1 537.0,590.1 539.0,589.8 541.0,589.0 543.0,590.1 545.0,589.0 547.0,589.4 549.0,590.1 551.0,589.9 553.0,589.8 555.0,589.4 557.0,589.1 559.0,589.7 561.0,589.0 563.0,589.1 565.0,589.4 567.0,588.9 569.0,589.4 571.0,589.8 573.0,589.7 575.0,589.5 577.0,589.7 579.0,589.5 581.0,589.1 583.0,589.6 585.0,589.4 587.0,589.8 589.0,590.0 591.0,589.4 593.0,589.6 595.0,589.8 597.0,589.4 599.0,589.2 601.0,589.8 603.0,590.0 605.0,589.8 607.0,589.7 609.0,589.9 611.0,589.7 613.0,589.7 615.0,589.4 617.0,589.3 619.0,589.7 621.0,589.0 623.0,589.4 625.0,589.8 627.0,589.8 629.0,589.7 631.0,589.2 632.0,589.5 632.0,602.9 630.0,602.9 628.0,603.2 626.0,602.8 624.0,603.3 622.0,603.8 620.0,602.4 618.0,603.3 616.0,603.5 614.0,602.8 612.0,603.0 610.0,603.9 608.0,602.2 606.0,603.1 604.0,602.4 602.0,603.5 600.0,603.8 598.0,603.0 596.0,602.3 594.0,603.1 592.0,603.1 590.0,603.4 588.0,603.0 586.0,603.3 584.0,603.6 582.0,603.0 580.0,602.8 578.0,603.8 576.0,602.5 574.0,603.3 572.0,602.8 570.0,603.5 568.0,602.3 566.0,603.9 564.0,602.7 562.0,602.2 560.0,602.6 558.0,602.8 556.0,602.1 554.0,602.9 552.0,602.9 550.0,603.4 548.0,602.7 546.0,602.6 544.0,602.5 542.0,603.4 540.0,603.8 538.0,603.0 536.0,602.5 534.0,603.5 532.0,602.8 530.0,602.5 528.0,602.3 526.0,603.5 524.0,603.6 522.0,603.2 520.0,602.9 518.0,603.1 516.0,602.5 514.0,603.8 512.0,602.7 510.0,603.2 508.0,603.6 506.0,603.6 504.0,602.9 502.0,602.6 500.0,603.1 498.0,602.3 496.0,603.6 494.0,602.7 492.0,603.6 490.0,602.6 488.0,602.8 486.0,602.6 484.0,602.9 482.0,602.4 480.0,602.1 478.0,603.4 476.0,602.6 474.0,602.5 472.0,602.6 470.0,603.0 468.0,602.9 466.0,603.2 464.0,603.3 462.0,602.8 460.0,603.8 458.0,603.6 456.0,602.2 454.0,603.6 452.0,603.7 450.0,603.5 448.0,602.4 446.0,603.6 444.0,603.2 442.0,602.1 441.0,603.0" fill="#FF0033"/>
<rect x="437.8" y="578" width="8" height="12" rx="3.5" fill="#00FFC8"/><rect x="437.8" y="590" width="8" height="13.5" rx="3.5" fill="#FF0033"/>
<rect x="438.5" y="857" width="193.5" height="3" fill="#FFE800" />
</g>
<text x="392.0" y="582.0" font-size="12.7" font-weight="normal" fill="#000" text-anchor="end" textLength="15.5" lengthAdjust="spacingAndGlyphs" >7.0</text>
<text x="392.0" y="617.4" font-size="12.7" font-weight="normal" fill="#000" text-anchor="end" textLength="15.5" lengthAdjust="spacingAndGlyphs" >6.0</text>
<text x="392.0" y="652.8" font-size="12.7" font-weight="normal" fill="#000" text-anchor="end" textLength="15.5" lengthAdjust="spacingAndGlyphs" >5.0</text>
<text x="392.0" y="688.2" font-size="12.7" font-weight="normal" fill="#000" text-anchor="end" textLength="15.5" lengthAdjust="spacingAndGlyphs" >4.0</text>
<text x="392.0" y="723.6" font-size="12.7" font-weight="normal" fill="#000" text-anchor="end" textLength="15.5" lengthAdjust="spacingAndGlyphs" >3.0</text>
<text x="392.0" y="759.0" font-size="12.7" font-weight="normal" fill="#000" text-anchor="end" textLength="15.5" lengthAdjust="spacingAndGlyphs" >2.0</text>
<text x="392.0" y="794.4" font-size="12.7" font-weight="normal" fill="#000" text-anchor="end" textLength="15.5" lengthAdjust="spacingAndGlyphs" >1.0</text>
<text x="392.0" y="829.8" font-size="12.7" font-weight="normal" fill="#000" text-anchor="end" textLength="15.5" lengthAdjust="spacingAndGlyphs" >0.0</text>
<text x="392.0" y="865.2" font-size="12.7" font-weight="normal" fill="#000" text-anchor="end" textLength="18.5" lengthAdjust="spacingAndGlyphs" >-1.0</text>
<text x="386.5" y="879.0" font-size="12.7" font-weight="normal" fill="#000" text-anchor="start" textLength="27.0" lengthAdjust="spacingAndGlyphs" >22:00</text>
<text x="426.1" y="879.0" font-size="12.7" font-weight="normal" fill="#000" text-anchor="start" textLength="27.0" lengthAdjust="spacingAndGlyphs" >00:00</text>
<text x="467.1" y="879.0" font-size="12.7" font-weight="normal" fill="#000" text-anchor="start" textLength="27.0" lengthAdjust="spacingAndGlyphs" >02:00</text>
<text x="508.9" y="879.0" font-size="12.7" font-weight="normal" fill="#000" text-anchor="start" textLength="27.0" lengthAdjust="spacingAndGlyphs" >04:00</text>
<text x="549.9" y="879.0" font-size="12.7" font-weight="normal" fill="#000" text-anchor="start" textLength="27.0" lengthAdjust="spacingAndGlyphs" >06:00</text>
<text x="616.5" y="879.0" font-size="12.7" font-weight="normal" fill="#000" text-anchor="start" textLength="27.0" lengthAdjust="spacingAndGlyphs" >09:12</text>
<text x="491.1" y="896.0" font-size="12.7" font-weight="normal" fill="#000" text-anchor="start" textLength="26.5" lengthAdjust="spacingAndGlyphs" >Time</text>
<g transform="translate(364,717) rotate(-90)">
<text x="0.0" y="0.0" font-size="12.7" font-weight="normal" fill="#000" text-anchor="middle" textLength="86.0" lengthAdjust="spacingAndGlyphs" >Temperature (K)</text>
</g>
<defs><linearGradient id="gp" x1="0" x2="1" y1="0" y2="0"><stop offset="0" stop-color="#C0C0C0"/><stop offset="0.55" stop-color="#909090"/><stop offset="0.92" stop-color="#686868"/><stop offset="1" stop-color="#484848"/></linearGradient></defs>
<rect x="652" y="578" width="311" height="310" fill="#C0C0C0"/><rect x="652" y="578" width="12" height="310" fill="#D2D2D2"/><rect x="663" y="578" width="1.5" height="310" fill="#C9C9C9"/><rect x="950" y="578" width="13" height="310" fill="url(#gp)"/>
<g shape-rendering="crispEdges">
<rect x="652" y="578" width="306" height="2" fill="#D6D6D6"/>
<rect x="652" y="886" width="311" height="2" fill="#8E8E8E"/>
<rect x="651" y="578" width="1" height="310" fill="#B4B4BC"/>
<rect x="738" y="588" width="182" height="245" fill="#000" />
<rect x="743" y="588" width="1" height="245" fill="#585800"/>
<rect x="748" y="588" width="1" height="245" fill="#585800"/>
<rect x="753" y="588" width="1" height="245" fill="#585800"/>
<rect x="758" y="588" width="1" height="245" fill="#585800"/>
<rect x="763" y="588" width="1" height="245" fill="#585800"/>
<rect x="768" y="588" width="1" height="245" fill="#585800"/>
<rect x="773" y="588" width="1" height="245" fill="#585800"/>
<rect x="777" y="588" width="1" height="245" fill="#585800"/>
<rect x="787" y="588" width="1" height="245" fill="#585800"/>
<rect x="792" y="588" width="1" height="245" fill="#585800"/>
<rect x="797" y="588" width="1" height="245" fill="#585800"/>
<rect x="802" y="588" width="1" height="245" fill="#585800"/>
<rect x="807" y="588" width="1" height="245" fill="#585800"/>
<rect x="812" y="588" width="1" height="245" fill="#585800"/>
<rect x="817" y="588" width="1" height="245" fill="#585800"/>
<rect x="822" y="588" width="1" height="245" fill="#585800"/>
<rect x="832" y="588" width="1" height="245" fill="#585800"/>
<rect x="837" y="588" width="1" height="245" fill="#585800"/>
<rect x="842" y="588" width="1" height="245" fill="#585800"/>
<rect x="847" y="588" width="1" height="245" fill="#585800"/>
<rect x="852" y="588" width="1" height="245" fill="#585800"/>
<rect x="857" y="588" width="1" height="245" fill="#585800"/>
<rect x="861" y="588" width="1" height="245" fill="#585800"/>
<rect x="866" y="588" width="1" height="245" fill="#585800"/>
<rect x="876" y="588" width="1" height="245" fill="#585800"/>
<rect x="881" y="588" width="1" height="245" fill="#585800"/>
<rect x="886" y="588" width="1" height="245" fill="#585800"/>
<rect x="891" y="588" width="1" height="245" fill="#585800"/>
<rect x="896" y="588" width="1" height="245" fill="#585800"/>
<rect x="901" y="588" width="1" height="245" fill="#585800"/>
<rect x="906" y="588" width="1" height="245" fill="#585800"/>
<rect x="911" y="588" width="1" height="245" fill="#585800"/>
<rect x="732" y="588" width="5" height="1" fill="#000"/>
<rect x="738" y="608" width="182" height="1" fill="#989800"/>
<rect x="732" y="608" width="5" height="1" fill="#000"/>
<rect x="738" y="629" width="182" height="1" fill="#989800"/>
<rect x="732" y="629" width="5" height="1" fill="#000"/>
<rect x="738" y="649" width="182" height="1" fill="#989800"/>
<rect x="732" y="649" width="5" height="1" fill="#000"/>
<rect x="738" y="670" width="182" height="1" fill="#989800"/>
<rect x="732" y="670" width="5" height="1" fill="#000"/>
<rect x="738" y="690" width="182" height="1" fill="#989800"/>
<rect x="732" y="690" width="5" height="1" fill="#000"/>
<rect x="738" y="710" width="182" height="1" fill="#989800"/>
<rect x="732" y="710" width="5" height="1" fill="#000"/>
<rect x="738" y="731" width="182" height="1" fill="#989800"/>
<rect x="732" y="731" width="5" height="1" fill="#000"/>
<rect x="738" y="751" width="182" height="1" fill="#989800"/>
<rect x="732" y="751" width="5" height="1" fill="#000"/>
<rect x="738" y="772" width="182" height="1" fill="#989800"/>
<rect x="732" y="772" width="5" height="1" fill="#000"/>
<rect x="738" y="792" width="182" height="1" fill="#989800"/>
<rect x="732" y="792" width="5" height="1" fill="#000"/>
<rect x="738" y="813" width="182" height="1" fill="#989800"/>
<rect x="732" y="813" width="5" height="1" fill="#000"/>
<rect x="732" y="832" width="5" height="1" fill="#000"/>
<rect x="783" y="588" width="1" height="245" fill="#989800"/>
<rect x="827" y="588" width="1" height="245" fill="#989800"/>
<rect x="872" y="588" width="1" height="245" fill="#989800"/>
<rect x="916" y="588" width="1" height="245" fill="#989800"/>
<rect x="738" y="833" width="1" height="5" fill="#000"/>
<rect x="783" y="833" width="1" height="5" fill="#000"/>
<rect x="827" y="833" width="1" height="5" fill="#000"/>
<rect x="872" y="833" width="1" height="5" fill="#000"/>
<rect x="918" y="833" width="1" height="5" fill="#000"/>
</g>
<clipPath id="c3"><rect x="738" y="588" width="182" height="245"/></clipPath><g clip-path="url(#c3)">
<polygon points="783.5,607.0 786.5,603.4 789.0,601.2 791.5,601.4 794.0,601.5 796.5,603.0 799.0,600.3 801.5,601.5 804.0,601.4 806.5,601.5 809.0,599.3 811.5,600.1 814.0,599.5 816.5,599.6 819.0,598.3 821.5,598.9 824.0,598.5 826.5,598.3 829.0,598.2 831.5,596.1 834.0,597.4 836.5,597.9 839.0,596.9 841.5,598.9 844.0,597.8 846.5,595.8 849.0,598.0 851.5,596.8 854.0,597.4 856.5,598.7 859.0,598.1 861.5,596.8 864.0,596.9 866.5,597.4 869.0,596.4 871.5,597.1 874.0,598.4 876.5,598.4 879.0,597.4 881.5,597.4 884.0,597.9 886.5,596.8 889.0,596.7 891.5,597.8 894.0,595.8 896.5,598.6 899.0,595.9 901.5,595.7 904.0,598.7 906.5,597.9 909.0,598.7 911.5,597.7 914.0,598.0 916.5,597.9 919.0,597.9 919.0,647.6 916.5,646.7 914.0,648.1 911.5,648.2 909.0,648.1 906.5,648.8 904.0,648.1 901.5,646.7 899.0,647.1 896.5,647.9 894.0,648.5 891.5,648.7 889.0,648.1 886.5,647.1 884.0,648.8 881.5,649.4 879.0,647.0 876.5,647.4 874.0,647.0 871.5,647.9 869.0,647.5 866.5,648.7 864.0,647.7 861.5,649.0 859.0,648.2 856.5,646.1 854.0,647.7 851.5,649.4 849.0,649.3 846.5,648.3 844.0,648.5 841.5,646.7 839.0,648.0 836.5,649.6 834.0,648.7 831.5,649.8 829.0,650.0 826.5,648.8 824.0,647.7 821.5,647.5 819.0,647.9 816.5,648.4 814.0,650.7 811.5,650.3 809.0,650.3 806.5,650.9 804.0,651.2 801.5,650.9 799.0,651.4 796.5,651.1 794.0,649.0 791.5,651.3 789.0,649.2 786.5,649.7 783.5,648.0" fill="#FF0033"/>
<circle cx="786.5" cy="603.1" r="2.3" fill="#FF0033"/>
<circle cx="794.0" cy="599.3" r="2.3" fill="#FF0033"/>
<circle cx="801.5" cy="599.5" r="2.3" fill="#FF0033"/>
<circle cx="809.0" cy="596.9" r="2.3" fill="#FF0033"/>
<circle cx="816.5" cy="599.5" r="2.3" fill="#FF0033"/>
<circle cx="824.0" cy="598.7" r="2.3" fill="#FF0033"/>
<circle cx="831.5" cy="595.6" r="2.3" fill="#FF0033"/>
<circle cx="839.0" cy="595.5" r="2.3" fill="#FF0033"/>
<circle cx="846.5" cy="595.8" r="2.3" fill="#FF0033"/>
<circle cx="854.0" cy="597.2" r="2.3" fill="#FF0033"/>
<circle cx="861.5" cy="596.0" r="2.3" fill="#FF0033"/>
<circle cx="869.0" cy="594.7" r="2.3" fill="#FF0033"/>
<circle cx="876.5" cy="596.8" r="2.3" fill="#FF0033"/>
<circle cx="884.0" cy="596.6" r="2.3" fill="#FF0033"/>
<circle cx="891.5" cy="596.3" r="2.3" fill="#FF0033"/>
<circle cx="899.0" cy="594.7" r="2.3" fill="#FF0033"/>
<circle cx="906.5" cy="597.3" r="2.3" fill="#FF0033"/>
<circle cx="914.0" cy="598.3" r="2.3" fill="#FF0033"/>
<circle cx="789.0" cy="648.9" r="2.3" fill="#FF0033"/>
<circle cx="796.5" cy="652.3" r="2.3" fill="#FF0033"/>
<circle cx="804.0" cy="650.8" r="2.3" fill="#FF0033"/>
<circle cx="811.5" cy="650.2" r="2.3" fill="#FF0033"/>
<circle cx="819.0" cy="649.8" r="2.3" fill="#FF0033"/>
<circle cx="826.5" cy="650.0" r="2.3" fill="#FF0033"/>
<circle cx="834.0" cy="651.0" r="2.3" fill="#FF0033"/>
<circle cx="841.5" cy="647.5" r="2.3" fill="#FF0033"/>
<circle cx="849.0" cy="648.9" r="2.3" fill="#FF0033"/>
<circle cx="856.5" cy="646.8" r="2.3" fill="#FF0033"/>
<circle cx="864.0" cy="648.9" r="2.3" fill="#FF0033"/>
<circle cx="871.5" cy="650.3" r="2.3" fill="#FF0033"/>
<circle cx="879.0" cy="649.4" r="2.3" fill="#FF0033"/>
<circle cx="886.5" cy="648.0" r="2.3" fill="#FF0033"/>
<circle cx="894.0" cy="649.3" r="2.3" fill="#FF0033"/>
<circle cx="901.5" cy="646.5" r="2.3" fill="#FF0033"/>
<circle cx="909.0" cy="649.6" r="2.3" fill="#FF0033"/>
<circle cx="916.5" cy="646.9" r="2.3" fill="#FF0033"/>
<rect x="781" y="610" width="3" height="35" fill="#FF2244"/>
</g>
<g shape-rendering="crispEdges">
<rect x="783" y="588" width="1" height="245" fill="#FFEE00"/>
<rect x="738" y="819" width="182" height="1" fill="#FFEE00"/>
</g>
<path d="M780.5 816.5L786 822M786 816.5L780.5 822" stroke="#FF6A00" stroke-width="1.4"/>
<text x="730.5" y="592.8" font-size="12.7" font-weight="normal" fill="#000" text-anchor="end" textLength="25.5" lengthAdjust="spacingAndGlyphs" >9750</text>
<text x="730.5" y="613.2" font-size="12.7" font-weight="normal" fill="#000" text-anchor="end" textLength="25.5" lengthAdjust="spacingAndGlyphs" >9500</text>
<text x="730.5" y="633.6" font-size="12.7" font-weight="normal" fill="#000" text-anchor="end" textLength="25.5" lengthAdjust="spacingAndGlyphs" >9250</text>
<text x="730.5" y="654.0" font-size="12.7" font-weight="normal" fill="#000" text-anchor="end" textLength="25.5" lengthAdjust="spacingAndGlyphs" >9000</text>
<text x="730.5" y="674.5" font-size="12.7" font-weight="normal" fill="#000" text-anchor="end" textLength="25.5" lengthAdjust="spacingAndGlyphs" >8750</text>
<text x="730.5" y="694.9" font-size="12.7" font-weight="normal" fill="#000" text-anchor="end" textLength="25.5" lengthAdjust="spacingAndGlyphs" >8500</text>
<text x="730.5" y="715.3" font-size="12.7" font-weight="normal" fill="#000" text-anchor="end" textLength="25.5" lengthAdjust="spacingAndGlyphs" >8250</text>
<text x="730.5" y="735.7" font-size="12.7" font-weight="normal" fill="#000" text-anchor="end" textLength="25.5" lengthAdjust="spacingAndGlyphs" >8000</text>
<text x="730.5" y="756.1" font-size="12.7" font-weight="normal" fill="#000" text-anchor="end" textLength="25.5" lengthAdjust="spacingAndGlyphs" >7750</text>
<text x="730.5" y="776.5" font-size="12.7" font-weight="normal" fill="#000" text-anchor="end" textLength="25.5" lengthAdjust="spacingAndGlyphs" >7500</text>
<text x="730.5" y="797.0" font-size="12.7" font-weight="normal" fill="#000" text-anchor="end" textLength="25.5" lengthAdjust="spacingAndGlyphs" >7250</text>
<text x="730.5" y="817.4" font-size="12.7" font-weight="normal" fill="#000" text-anchor="end" textLength="25.5" lengthAdjust="spacingAndGlyphs" >7000</text>
<text x="730.5" y="837.8" font-size="12.7" font-weight="normal" fill="#000" text-anchor="end" textLength="25.5" lengthAdjust="spacingAndGlyphs" >6750</text>
<text x="724.9" y="851.8" font-size="12.7" font-weight="normal" fill="#000" text-anchor="start" textLength="27.0" lengthAdjust="spacingAndGlyphs" >21:00</text>
<text x="714.9" y="866.6" font-size="12.7" font-weight="normal" fill="#000" text-anchor="start" textLength="47.0" lengthAdjust="spacingAndGlyphs" >4/3/2023</text>
<text x="813.8" y="851.8" font-size="12.7" font-weight="normal" fill="#000" text-anchor="start" textLength="27.0" lengthAdjust="spacingAndGlyphs" >03:00</text>
<text x="803.8" y="866.6" font-size="12.7" font-weight="normal" fill="#000" text-anchor="start" textLength="47.0" lengthAdjust="spacingAndGlyphs" >4/4/2023</text>
<text x="904.5" y="851.8" font-size="12.7" font-weight="normal" fill="#000" text-anchor="start" textLength="27.0" lengthAdjust="spacingAndGlyphs" >09:12</text>
<text x="894.5" y="866.6" font-size="12.7" font-weight="normal" fill="#000" text-anchor="start" textLength="47.0" lengthAdjust="spacingAndGlyphs" >4/4/2023</text>
<text x="817.0" y="883.8" font-size="12.7" font-weight="normal" fill="#000" text-anchor="start" textLength="26.5" lengthAdjust="spacingAndGlyphs" >Time</text>
<g transform="translate(700,710.5) rotate(-90)">
<text x="0.0" y="0.0" font-size="12.7" font-weight="normal" fill="#000" text-anchor="middle" textLength="60.0" lengthAdjust="spacingAndGlyphs" >Counts/sec</text>
</g>
<g shape-rendering="crispEdges">
<rect x="17" y="910" width="54" height="24" fill="#EADDC6" />
<polygon points="17,910 71,910 68,913 20,931 17,934" fill="#B8AC96"/>
<rect x="20" y="913" width="48" height="18" fill="#D8D8D8" />
<rect x="76" y="926" width="72" height="9" fill="#1E4A12" />
<rect x="76" y="926" width="72" height="1" fill="#88806E"/>
<rect x="76" y="926" width="1" height="9" fill="#88806E"/>
<rect x="76" y="934" width="72" height="1" fill="#F0E6D0"/>
<defs><linearGradient id="sbg" x1="0" x2="0" y1="0" y2="1"><stop offset="0" stop-color="#CCCCCC"/><stop offset="0.45" stop-color="#B8B8B8"/><stop offset="1" stop-color="#A6A6A6"/></linearGradient><linearGradient id="sbr" x1="0" x2="1"><stop offset="0" stop-color="#A0A0A0" stop-opacity="0"/><stop offset="1" stop-color="#5A5A5A"/></linearGradient><linearGradient id="sbl" x1="0" x2="1"><stop offset="0" stop-color="#909090"/><stop offset="1" stop-color="#C0C0C0" stop-opacity="0"/></linearGradient></defs>
<rect x="189" y="908" width="204" height="33" fill="url(#sbg)"/><rect x="386" y="908" width="7" height="33" fill="url(#sbr)"/><rect x="189" y="908" width="5" height="33" fill="url(#sbl)"/>
<rect x="189.5" y="908.5" width="203" height="32" fill="none" stroke="#484848" stroke-width="1" />
<rect x="190" y="938" width="202" height="2" fill="#7A7A7A"/>
<rect x="433" y="906" width="234" height="32" fill="#EADDC6" />
<polygon points="433,906 667,906 664,909 436,935 433,938" fill="#B8AC96"/>
<rect x="436" y="909" width="228" height="26" fill="#88FF66" />
<rect x="816" y="912" width="131" height="24" fill="#EADDC6" />
<polygon points="816,912 947,912 944,915 819,933 816,936" fill="#B8AC96"/>
<rect x="819" y="915" width="125" height="18" fill="#D8D8D8" />
</g>
<defs><linearGradient id="gb" x1="0" x2="1"><stop offset="0" stop-color="#1A3C10"/><stop offset="0.5" stop-color="#3A7A28"/><stop offset="1" stop-color="#1A3C10"/></linearGradient></defs><rect x="77" y="927" width="70" height="7" fill="url(#gb)"/>
<text x="22.0" y="927.0" font-size="12.7" font-weight="normal" fill="#000" text-anchor="start" textLength="31.0" lengthAdjust="spacingAndGlyphs" >676.9</text>
<text x="75.4" y="921.0" font-size="12.7" font-weight="normal" fill="#000" text-anchor="start" textLength="83.0" lengthAdjust="spacingAndGlyphs" >Cycle time [ms]</text>
<text x="223.5" y="931.0" font-size="17" font-weight="bold" fill="#FF0000" text-anchor="start" textLength="134.0" lengthAdjust="spacingAndGlyphs" >STOP PROGRAM</text>
<text x="500.5" y="931.0" font-size="20" font-weight="normal" fill="#000" text-anchor="start" textLength="95.0" lengthAdjust="spacingAndGlyphs" >System OK</text>
<text x="695.5" y="927.8" font-size="12.7" font-weight="normal" fill="#000" text-anchor="start" textLength="116.6" lengthAdjust="spacingAndGlyphs" >Last moderator grown</text>
<text x="821.2" y="928.5" font-size="12.7" font-weight="normal" fill="#000" text-anchor="start" textLength="109.0" lengthAdjust="spacingAndGlyphs" >Wed 29 Mar 2023 10:</text>
</svg></body></html>
